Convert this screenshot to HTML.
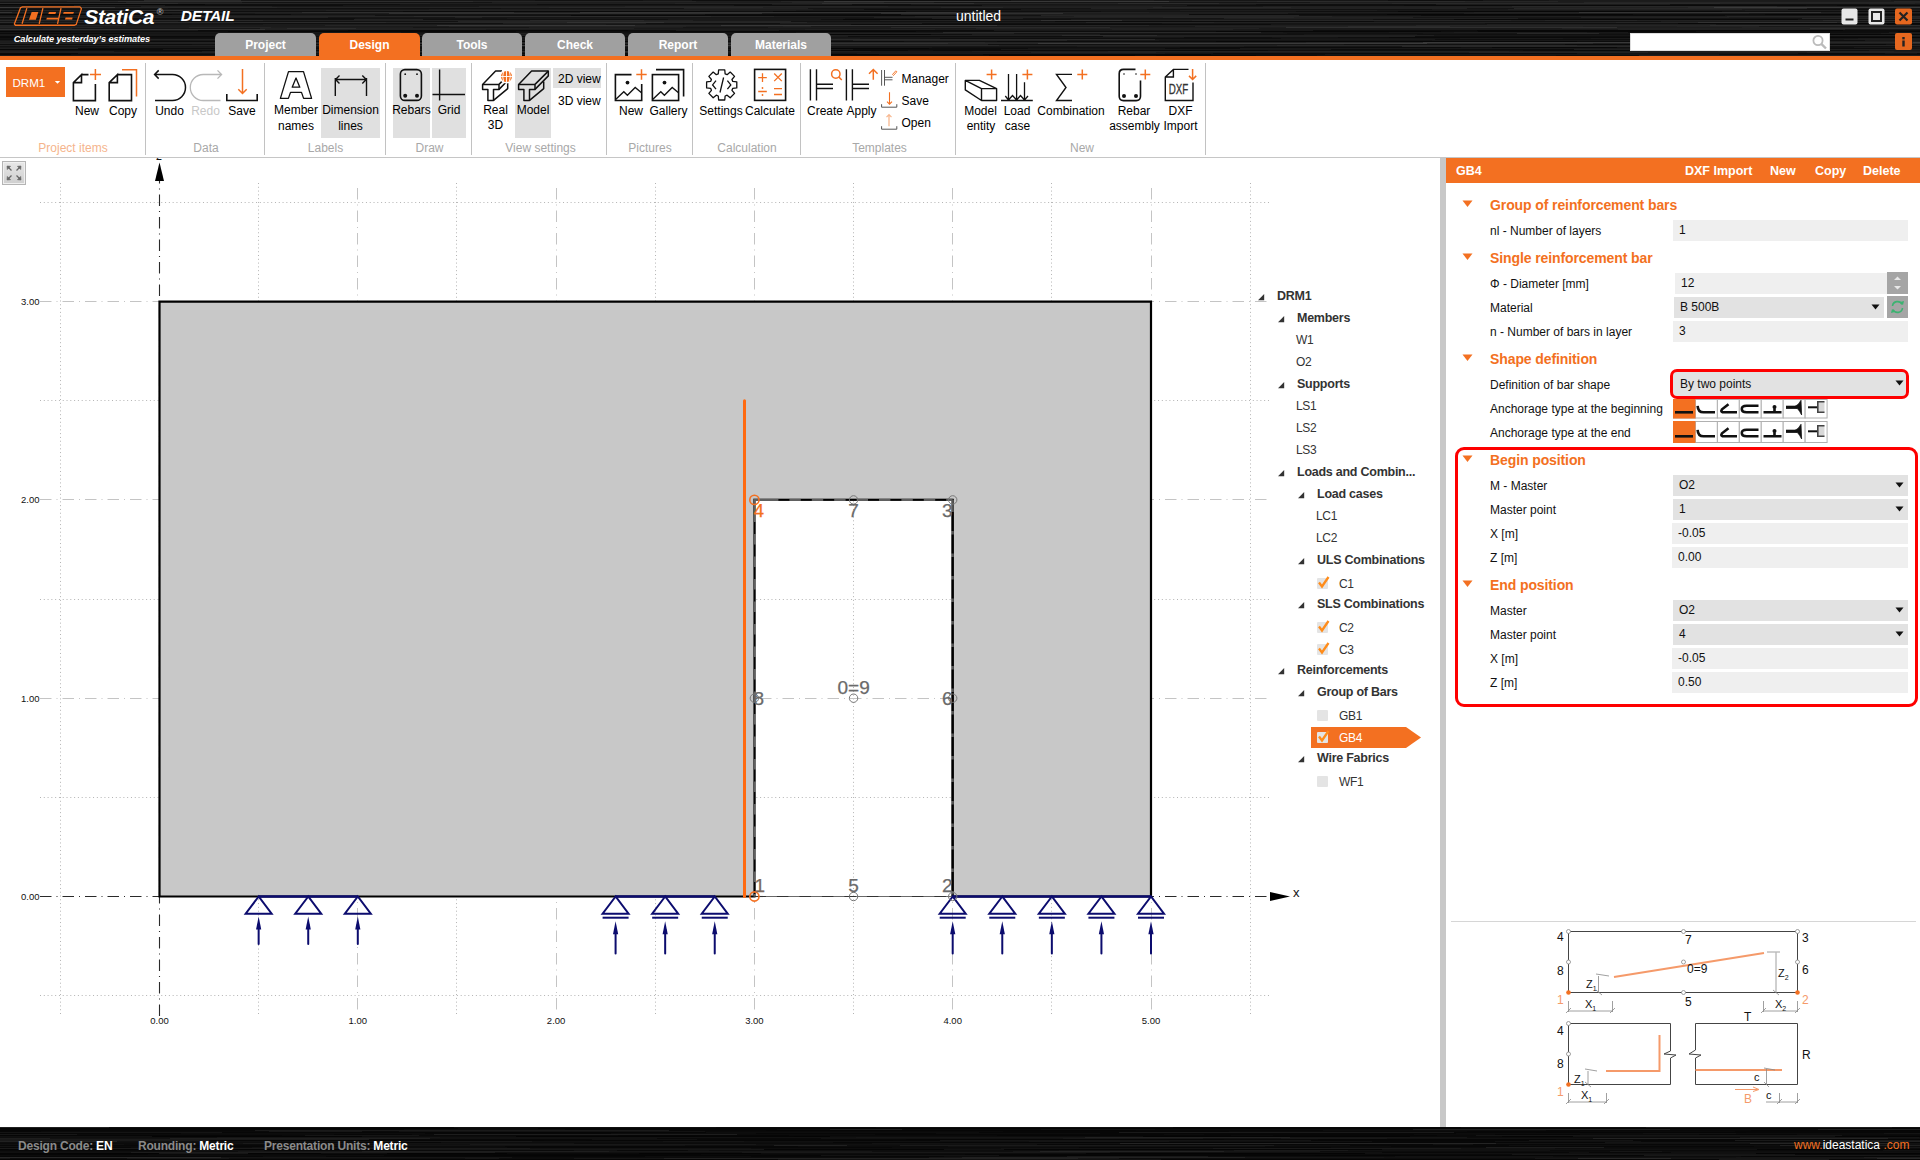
<!DOCTYPE html>
<html><head><meta charset="utf-8"><title>IDEA StatiCa Detail</title>
<style>
*{margin:0;padding:0;box-sizing:border-box}
html,body{width:1920px;height:1160px;overflow:hidden;background:#fff;font-family:"Liberation Sans", sans-serif;color:#000}
.abs{position:absolute}
.t{position:absolute;white-space:nowrap;line-height:1}
svg{position:absolute;overflow:visible}
</style></head><body>

<svg style="left:0;top:0px" width="1920" height="56"><rect x="0" y="0" width="1920" height="1" fill="rgb(22,22,22)"/><rect x="-162" y="0" width="262" height="1" fill="rgb(40,40,40)" opacity="0.7"/><rect x="144" y="0" width="97" height="1" fill="rgb(48,48,48)" opacity="0.7"/><rect x="535" y="0" width="108" height="1" fill="rgb(16,16,16)" opacity="0.7"/><rect x="692" y="0" width="319" height="1" fill="rgb(12,12,12)" opacity="0.7"/><rect x="1050" y="0" width="104" height="1" fill="rgb(30,30,30)" opacity="0.7"/><rect x="1388" y="0" width="95" height="1" fill="rgb(12,12,12)" opacity="0.7"/><rect x="1549" y="0" width="342" height="1" fill="rgb(30,30,30)" opacity="0.7"/><rect x="0" y="1" width="1920" height="1" fill="rgb(38,38,38)"/><rect x="-56" y="1" width="123" height="1" fill="rgb(28,28,28)" opacity="0.7"/><rect x="118" y="1" width="355" height="1" fill="rgb(50,50,50)" opacity="0.7"/><rect x="696" y="1" width="85" height="1" fill="rgb(28,28,28)" opacity="0.7"/><rect x="824" y="1" width="345" height="1" fill="rgb(64,64,64)" opacity="0.7"/><rect x="1257" y="1" width="208" height="1" fill="rgb(46,46,46)" opacity="0.7"/><rect x="1558" y="1" width="336" height="1" fill="rgb(24,24,24)" opacity="0.7"/><rect x="0" y="2" width="1920" height="1" fill="rgb(29,29,29)"/><rect x="-26" y="2" width="152" height="1" fill="rgb(15,15,15)" opacity="0.7"/><rect x="242" y="2" width="250" height="1" fill="rgb(15,15,15)" opacity="0.7"/><rect x="792" y="2" width="92" height="1" fill="rgb(41,41,41)" opacity="0.7"/><rect x="934" y="2" width="376" height="1" fill="rgb(19,19,19)" opacity="0.7"/><rect x="1584" y="2" width="408" height="1" fill="rgb(41,41,41)" opacity="0.7"/><rect x="0" y="3" width="1920" height="1" fill="rgb(36,36,36)"/><rect x="-120" y="3" width="298" height="1" fill="rgb(48,48,48)" opacity="0.7"/><rect x="430" y="3" width="245" height="1" fill="rgb(30,30,30)" opacity="0.7"/><rect x="822" y="3" width="152" height="1" fill="rgb(54,54,54)" opacity="0.7"/><rect x="1118" y="3" width="101" height="1" fill="rgb(48,48,48)" opacity="0.7"/><rect x="1392" y="3" width="328" height="1" fill="rgb(44,44,44)" opacity="0.7"/><rect x="1915" y="3" width="289" height="1" fill="rgb(30,30,30)" opacity="0.7"/><rect x="0" y="4" width="1920" height="1" fill="rgb(15,15,15)"/><rect x="-69" y="4" width="274" height="1" fill="rgb(5,5,5)" opacity="0.7"/><rect x="400" y="4" width="137" height="1" fill="rgb(23,23,23)" opacity="0.7"/><rect x="772" y="4" width="80" height="1" fill="rgb(33,33,33)" opacity="0.7"/><rect x="911" y="4" width="345" height="1" fill="rgb(27,27,27)" opacity="0.7"/><rect x="1436" y="4" width="234" height="1" fill="rgb(33,33,33)" opacity="0.7"/><rect x="1869" y="4" width="364" height="1" fill="rgb(23,23,23)" opacity="0.7"/><rect x="0" y="5" width="1920" height="1" fill="rgb(14,14,14)"/><rect x="-177" y="5" width="198" height="1" fill="rgb(22,22,22)" opacity="0.7"/><rect x="74" y="5" width="91" height="1" fill="rgb(32,32,32)" opacity="0.7"/><rect x="343" y="5" width="391" height="1" fill="rgb(26,26,26)" opacity="0.7"/><rect x="982" y="5" width="205" height="1" fill="rgb(32,32,32)" opacity="0.7"/><rect x="1404" y="5" width="402" height="1" fill="rgb(8,8,8)" opacity="0.7"/><rect x="1837" y="5" width="296" height="1" fill="rgb(8,8,8)" opacity="0.7"/><rect x="0" y="6" width="1920" height="1" fill="rgb(31,31,31)"/><rect x="-171" y="6" width="312" height="1" fill="rgb(17,17,17)" opacity="0.7"/><rect x="272" y="6" width="207" height="1" fill="rgb(21,21,21)" opacity="0.7"/><rect x="625" y="6" width="263" height="1" fill="rgb(39,39,39)" opacity="0.7"/><rect x="1162" y="6" width="101" height="1" fill="rgb(21,21,21)" opacity="0.7"/><rect x="1512" y="6" width="265" height="1" fill="rgb(43,43,43)" opacity="0.7"/><rect x="0" y="7" width="1920" height="1" fill="rgb(40,40,40)"/><rect x="-165" y="7" width="280" height="1" fill="rgb(66,66,66)" opacity="0.7"/><rect x="277" y="7" width="272" height="1" fill="rgb(34,34,34)" opacity="0.7"/><rect x="763" y="7" width="178" height="1" fill="rgb(30,30,30)" opacity="0.7"/><rect x="1003" y="7" width="150" height="1" fill="rgb(30,30,30)" opacity="0.7"/><rect x="1291" y="7" width="397" height="1" fill="rgb(30,30,30)" opacity="0.7"/><rect x="1714" y="7" width="308" height="1" fill="rgb(66,66,66)" opacity="0.7"/><rect x="0" y="8" width="1920" height="1" fill="rgb(20,20,20)"/><rect x="-128" y="8" width="62" height="1" fill="rgb(10,10,10)" opacity="0.7"/><rect x="168" y="8" width="333" height="1" fill="rgb(14,14,14)" opacity="0.7"/><rect x="684" y="8" width="124" height="1" fill="rgb(38,38,38)" opacity="0.7"/><rect x="1091" y="8" width="376" height="1" fill="rgb(38,38,38)" opacity="0.7"/><rect x="1514" y="8" width="293" height="1" fill="rgb(46,46,46)" opacity="0.7"/><rect x="0" y="9" width="1920" height="1" fill="rgb(24,24,24)"/><rect x="-98" y="9" width="261" height="1" fill="rgb(10,10,10)" opacity="0.7"/><rect x="429" y="9" width="384" height="1" fill="rgb(32,32,32)" opacity="0.7"/><rect x="864" y="9" width="157" height="1" fill="rgb(10,10,10)" opacity="0.7"/><rect x="1147" y="9" width="285" height="1" fill="rgb(14,14,14)" opacity="0.7"/><rect x="1508" y="9" width="234" height="1" fill="rgb(36,36,36)" opacity="0.7"/><rect x="1788" y="9" width="112" height="1" fill="rgb(10,10,10)" opacity="0.7"/><rect x="0" y="10" width="1920" height="1" fill="rgb(29,29,29)"/><rect x="-175" y="10" width="246" height="1" fill="rgb(41,41,41)" opacity="0.7"/><rect x="104" y="10" width="96" height="1" fill="rgb(55,55,55)" opacity="0.7"/><rect x="326" y="10" width="374" height="1" fill="rgb(37,37,37)" opacity="0.7"/><rect x="796" y="10" width="384" height="1" fill="rgb(23,23,23)" opacity="0.7"/><rect x="1377" y="10" width="368" height="1" fill="rgb(23,23,23)" opacity="0.7"/><rect x="0" y="11" width="1920" height="1" fill="rgb(15,15,15)"/><rect x="-171" y="11" width="309" height="1" fill="rgb(23,23,23)" opacity="0.7"/><rect x="403" y="11" width="307" height="1" fill="rgb(9,9,9)" opacity="0.7"/><rect x="773" y="11" width="133" height="1" fill="rgb(5,5,5)" opacity="0.7"/><rect x="1101" y="11" width="195" height="1" fill="rgb(23,23,23)" opacity="0.7"/><rect x="1398" y="11" width="324" height="1" fill="rgb(5,5,5)" opacity="0.7"/><rect x="1847" y="11" width="330" height="1" fill="rgb(9,9,9)" opacity="0.7"/><rect x="0" y="12" width="1920" height="1" fill="rgb(34,34,34)"/><rect x="-61" y="12" width="73" height="1" fill="rgb(60,60,60)" opacity="0.7"/><rect x="302" y="12" width="212" height="1" fill="rgb(52,52,52)" opacity="0.7"/><rect x="580" y="12" width="416" height="1" fill="rgb(60,60,60)" opacity="0.7"/><rect x="1149" y="12" width="325" height="1" fill="rgb(28,28,28)" opacity="0.7"/><rect x="1579" y="12" width="242" height="1" fill="rgb(60,60,60)" opacity="0.7"/><rect x="0" y="13" width="1920" height="1" fill="rgb(29,29,29)"/><rect x="-62" y="13" width="317" height="1" fill="rgb(23,23,23)" opacity="0.7"/><rect x="389" y="13" width="373" height="1" fill="rgb(55,55,55)" opacity="0.7"/><rect x="881" y="13" width="182" height="1" fill="rgb(55,55,55)" opacity="0.7"/><rect x="1288" y="13" width="176" height="1" fill="rgb(19,19,19)" opacity="0.7"/><rect x="1749" y="13" width="312" height="1" fill="rgb(23,23,23)" opacity="0.7"/><rect x="0" y="14" width="1920" height="1" fill="rgb(12,12,12)"/><rect x="-129" y="14" width="301" height="1" fill="rgb(6,6,6)" opacity="0.7"/><rect x="291" y="14" width="414" height="1" fill="rgb(24,24,24)" opacity="0.7"/><rect x="901" y="14" width="288" height="1" fill="rgb(38,38,38)" opacity="0.7"/><rect x="1387" y="14" width="246" height="1" fill="rgb(5,5,5)" opacity="0.7"/><rect x="1765" y="14" width="112" height="1" fill="rgb(5,5,5)" opacity="0.7"/><rect x="0" y="15" width="1920" height="1" fill="rgb(18,18,18)"/><rect x="-114" y="15" width="164" height="1" fill="rgb(26,26,26)" opacity="0.7"/><rect x="70" y="15" width="305" height="1" fill="rgb(36,36,36)" opacity="0.7"/><rect x="571" y="15" width="389" height="1" fill="rgb(5,5,5)" opacity="0.7"/><rect x="1041" y="15" width="258" height="1" fill="rgb(44,44,44)" opacity="0.7"/><rect x="1421" y="15" width="304" height="1" fill="rgb(8,8,8)" opacity="0.7"/><rect x="0" y="16" width="1920" height="1" fill="rgb(37,37,37)"/><rect x="-38" y="16" width="230" height="1" fill="rgb(23,23,23)" opacity="0.7"/><rect x="414" y="16" width="297" height="1" fill="rgb(45,45,45)" opacity="0.7"/><rect x="774" y="16" width="141" height="1" fill="rgb(27,27,27)" opacity="0.7"/><rect x="1000" y="16" width="74" height="1" fill="rgb(27,27,27)" opacity="0.7"/><rect x="1332" y="16" width="395" height="1" fill="rgb(27,27,27)" opacity="0.7"/><rect x="0" y="17" width="1920" height="1" fill="rgb(33,33,33)"/><rect x="-111" y="17" width="139" height="1" fill="rgb(45,45,45)" opacity="0.7"/><rect x="328" y="17" width="127" height="1" fill="rgb(19,19,19)" opacity="0.7"/><rect x="482" y="17" width="392" height="1" fill="rgb(19,19,19)" opacity="0.7"/><rect x="1163" y="17" width="131" height="1" fill="rgb(41,41,41)" opacity="0.7"/><rect x="1413" y="17" width="168" height="1" fill="rgb(19,19,19)" opacity="0.7"/><rect x="1729" y="17" width="168" height="1" fill="rgb(27,27,27)" opacity="0.7"/><rect x="0" y="18" width="1920" height="1" fill="rgb(19,19,19)"/><rect x="-5" y="18" width="360" height="1" fill="rgb(13,13,13)" opacity="0.7"/><rect x="507" y="18" width="338" height="1" fill="rgb(27,27,27)" opacity="0.7"/><rect x="932" y="18" width="91" height="1" fill="rgb(37,37,37)" opacity="0.7"/><rect x="1224" y="18" width="294" height="1" fill="rgb(37,37,37)" opacity="0.7"/><rect x="1802" y="18" width="275" height="1" fill="rgb(45,45,45)" opacity="0.7"/><rect x="0" y="19" width="1920" height="1" fill="rgb(16,16,16)"/><rect x="-64" y="19" width="137" height="1" fill="rgb(28,28,28)" opacity="0.7"/><rect x="354" y="19" width="69" height="1" fill="rgb(42,42,42)" opacity="0.7"/><rect x="668" y="19" width="153" height="1" fill="rgb(28,28,28)" opacity="0.7"/><rect x="843" y="19" width="136" height="1" fill="rgb(6,6,6)" opacity="0.7"/><rect x="1071" y="19" width="302" height="1" fill="rgb(28,28,28)" opacity="0.7"/><rect x="1454" y="19" width="344" height="1" fill="rgb(5,5,5)" opacity="0.7"/><rect x="0" y="20" width="1920" height="1" fill="rgb(33,33,33)"/><rect x="-68" y="20" width="331" height="1" fill="rgb(45,45,45)" opacity="0.7"/><rect x="530" y="20" width="114" height="1" fill="rgb(45,45,45)" opacity="0.7"/><rect x="693" y="20" width="187" height="1" fill="rgb(23,23,23)" opacity="0.7"/><rect x="1041" y="20" width="81" height="1" fill="rgb(59,59,59)" opacity="0.7"/><rect x="1192" y="20" width="319" height="1" fill="rgb(41,41,41)" opacity="0.7"/><rect x="1545" y="20" width="92" height="1" fill="rgb(41,41,41)" opacity="0.7"/><rect x="1823" y="20" width="373" height="1" fill="rgb(45,45,45)" opacity="0.7"/><rect x="0" y="21" width="1920" height="1" fill="rgb(18,18,18)"/><rect x="-23" y="21" width="201" height="1" fill="rgb(26,26,26)" opacity="0.7"/><rect x="458" y="21" width="333" height="1" fill="rgb(44,44,44)" opacity="0.7"/><rect x="1055" y="21" width="319" height="1" fill="rgb(8,8,8)" opacity="0.7"/><rect x="1661" y="21" width="192" height="1" fill="rgb(30,30,30)" opacity="0.7"/><rect x="0" y="22" width="1920" height="1" fill="rgb(38,38,38)"/><rect x="-86" y="22" width="130" height="1" fill="rgb(46,46,46)" opacity="0.7"/><rect x="126" y="22" width="260" height="1" fill="rgb(46,46,46)" opacity="0.7"/><rect x="567" y="22" width="97" height="1" fill="rgb(56,56,56)" opacity="0.7"/><rect x="807" y="22" width="279" height="1" fill="rgb(24,24,24)" opacity="0.7"/><rect x="1214" y="22" width="402" height="1" fill="rgb(32,32,32)" opacity="0.7"/><rect x="1698" y="22" width="139" height="1" fill="rgb(56,56,56)" opacity="0.7"/><rect x="0" y="23" width="1920" height="1" fill="rgb(16,16,16)"/><rect x="-136" y="23" width="130" height="1" fill="rgb(24,24,24)" opacity="0.7"/><rect x="126" y="23" width="108" height="1" fill="rgb(24,24,24)" opacity="0.7"/><rect x="503" y="23" width="143" height="1" fill="rgb(34,34,34)" opacity="0.7"/><rect x="780" y="23" width="142" height="1" fill="rgb(34,34,34)" opacity="0.7"/><rect x="1162" y="23" width="323" height="1" fill="rgb(24,24,24)" opacity="0.7"/><rect x="1678" y="23" width="275" height="1" fill="rgb(6,6,6)" opacity="0.7"/><rect x="0" y="24" width="1920" height="1" fill="rgb(22,22,22)"/><rect x="-177" y="24" width="247" height="1" fill="rgb(8,8,8)" opacity="0.7"/><rect x="263" y="24" width="343" height="1" fill="rgb(30,30,30)" opacity="0.7"/><rect x="851" y="24" width="420" height="1" fill="rgb(8,8,8)" opacity="0.7"/><rect x="1487" y="24" width="229" height="1" fill="rgb(34,34,34)" opacity="0.7"/><rect x="1887" y="24" width="322" height="1" fill="rgb(8,8,8)" opacity="0.7"/><rect x="0" y="25" width="1920" height="1" fill="rgb(37,37,37)"/><rect x="-142" y="25" width="113" height="1" fill="rgb(23,23,23)" opacity="0.7"/><rect x="126" y="25" width="199" height="1" fill="rgb(23,23,23)" opacity="0.7"/><rect x="437" y="25" width="198" height="1" fill="rgb(63,63,63)" opacity="0.7"/><rect x="721" y="25" width="276" height="1" fill="rgb(63,63,63)" opacity="0.7"/><rect x="1149" y="25" width="267" height="1" fill="rgb(27,27,27)" opacity="0.7"/><rect x="1710" y="25" width="323" height="1" fill="rgb(49,49,49)" opacity="0.7"/><rect x="0" y="26" width="1920" height="1" fill="rgb(34,34,34)"/><rect x="-117" y="26" width="105" height="1" fill="rgb(28,28,28)" opacity="0.7"/><rect x="37" y="26" width="412" height="1" fill="rgb(24,24,24)" opacity="0.7"/><rect x="686" y="26" width="97" height="1" fill="rgb(28,28,28)" opacity="0.7"/><rect x="811" y="26" width="384" height="1" fill="rgb(20,20,20)" opacity="0.7"/><rect x="1348" y="26" width="102" height="1" fill="rgb(46,46,46)" opacity="0.7"/><rect x="1583" y="26" width="94" height="1" fill="rgb(28,28,28)" opacity="0.7"/><rect x="1759" y="26" width="292" height="1" fill="rgb(20,20,20)" opacity="0.7"/><rect x="0" y="27" width="1920" height="1" fill="rgb(29,29,29)"/><rect x="-94" y="27" width="197" height="1" fill="rgb(41,41,41)" opacity="0.7"/><rect x="189" y="27" width="82" height="1" fill="rgb(41,41,41)" opacity="0.7"/><rect x="413" y="27" width="116" height="1" fill="rgb(19,19,19)" opacity="0.7"/><rect x="683" y="27" width="85" height="1" fill="rgb(19,19,19)" opacity="0.7"/><rect x="891" y="27" width="219" height="1" fill="rgb(47,47,47)" opacity="0.7"/><rect x="1286" y="27" width="331" height="1" fill="rgb(55,55,55)" opacity="0.7"/><rect x="1742" y="27" width="208" height="1" fill="rgb(37,37,37)" opacity="0.7"/><rect x="0" y="28" width="1920" height="1" fill="rgb(33,33,33)"/><rect x="-155" y="28" width="198" height="1" fill="rgb(27,27,27)" opacity="0.7"/><rect x="72" y="28" width="188" height="1" fill="rgb(19,19,19)" opacity="0.7"/><rect x="287" y="28" width="69" height="1" fill="rgb(51,51,51)" opacity="0.7"/><rect x="634" y="28" width="342" height="1" fill="rgb(23,23,23)" opacity="0.7"/><rect x="1259" y="28" width="303" height="1" fill="rgb(23,23,23)" opacity="0.7"/><rect x="1810" y="28" width="114" height="1" fill="rgb(51,51,51)" opacity="0.7"/><rect x="0" y="29" width="1920" height="1" fill="rgb(33,33,33)"/><rect x="-74" y="29" width="339" height="1" fill="rgb(59,59,59)" opacity="0.7"/><rect x="486" y="29" width="319" height="1" fill="rgb(27,27,27)" opacity="0.7"/><rect x="935" y="29" width="177" height="1" fill="rgb(27,27,27)" opacity="0.7"/><rect x="1233" y="29" width="385" height="1" fill="rgb(23,23,23)" opacity="0.7"/><rect x="1845" y="29" width="237" height="1" fill="rgb(19,19,19)" opacity="0.7"/><rect x="0" y="30" width="1920" height="1" fill="rgb(12,12,12)"/><rect x="-182" y="30" width="380" height="1" fill="rgb(30,30,30)" opacity="0.7"/><rect x="348" y="30" width="280" height="1" fill="rgb(5,5,5)" opacity="0.7"/><rect x="676" y="30" width="103" height="1" fill="rgb(30,30,30)" opacity="0.7"/><rect x="994" y="30" width="319" height="1" fill="rgb(30,30,30)" opacity="0.7"/><rect x="1477" y="30" width="366" height="1" fill="rgb(5,5,5)" opacity="0.7"/><rect x="0" y="31" width="1920" height="1" fill="rgb(13,13,13)"/><rect x="-83" y="31" width="154" height="1" fill="rgb(5,5,5)" opacity="0.7"/><rect x="228" y="31" width="288" height="1" fill="rgb(5,5,5)" opacity="0.7"/><rect x="670" y="31" width="246" height="1" fill="rgb(7,7,7)" opacity="0.7"/><rect x="1216" y="31" width="225" height="1" fill="rgb(5,5,5)" opacity="0.7"/><rect x="1478" y="31" width="218" height="1" fill="rgb(5,5,5)" opacity="0.7"/><rect x="1898" y="31" width="153" height="1" fill="rgb(5,5,5)" opacity="0.7"/><rect x="0" y="32" width="1920" height="1" fill="rgb(24,24,24)"/><rect x="-179" y="32" width="303" height="1" fill="rgb(18,18,18)" opacity="0.7"/><rect x="401" y="32" width="395" height="1" fill="rgb(14,14,14)" opacity="0.7"/><rect x="943" y="32" width="318" height="1" fill="rgb(50,50,50)" opacity="0.7"/><rect x="1283" y="32" width="106" height="1" fill="rgb(18,18,18)" opacity="0.7"/><rect x="1454" y="32" width="133" height="1" fill="rgb(32,32,32)" opacity="0.7"/><rect x="1628" y="32" width="261" height="1" fill="rgb(10,10,10)" opacity="0.7"/><rect x="0" y="33" width="1920" height="1" fill="rgb(21,21,21)"/><rect x="-39" y="33" width="179" height="1" fill="rgb(7,7,7)" opacity="0.7"/><rect x="430" y="33" width="139" height="1" fill="rgb(39,39,39)" opacity="0.7"/><rect x="788" y="33" width="226" height="1" fill="rgb(39,39,39)" opacity="0.7"/><rect x="1287" y="33" width="136" height="1" fill="rgb(15,15,15)" opacity="0.7"/><rect x="1517" y="33" width="82" height="1" fill="rgb(47,47,47)" opacity="0.7"/><rect x="1881" y="33" width="381" height="1" fill="rgb(29,29,29)" opacity="0.7"/><rect x="0" y="34" width="1920" height="1" fill="rgb(16,16,16)"/><rect x="-66" y="34" width="318" height="1" fill="rgb(28,28,28)" opacity="0.7"/><rect x="280" y="34" width="411" height="1" fill="rgb(28,28,28)" opacity="0.7"/><rect x="828" y="34" width="103" height="1" fill="rgb(5,5,5)" opacity="0.7"/><rect x="972" y="34" width="128" height="1" fill="rgb(34,34,34)" opacity="0.7"/><rect x="1304" y="34" width="113" height="1" fill="rgb(24,24,24)" opacity="0.7"/><rect x="1668" y="34" width="345" height="1" fill="rgb(5,5,5)" opacity="0.7"/><rect x="0" y="35" width="1920" height="1" fill="rgb(32,32,32)"/><rect x="-64" y="35" width="408" height="1" fill="rgb(22,22,22)" opacity="0.7"/><rect x="614" y="35" width="195" height="1" fill="rgb(18,18,18)" opacity="0.7"/><rect x="1062" y="35" width="95" height="1" fill="rgb(50,50,50)" opacity="0.7"/><rect x="1434" y="35" width="334" height="1" fill="rgb(18,18,18)" opacity="0.7"/><rect x="0" y="36" width="1920" height="1" fill="rgb(14,14,14)"/><rect x="-10" y="36" width="302" height="1" fill="rgb(8,8,8)" opacity="0.7"/><rect x="350" y="36" width="195" height="1" fill="rgb(5,5,5)" opacity="0.7"/><rect x="670" y="36" width="178" height="1" fill="rgb(32,32,32)" opacity="0.7"/><rect x="1103" y="36" width="312" height="1" fill="rgb(40,40,40)" opacity="0.7"/><rect x="1630" y="36" width="99" height="1" fill="rgb(22,22,22)" opacity="0.7"/><rect x="1896" y="36" width="83" height="1" fill="rgb(26,26,26)" opacity="0.7"/><rect x="0" y="37" width="1920" height="1" fill="rgb(14,14,14)"/><rect x="-47" y="37" width="135" height="1" fill="rgb(8,8,8)" opacity="0.7"/><rect x="238" y="37" width="393" height="1" fill="rgb(32,32,32)" opacity="0.7"/><rect x="806" y="37" width="378" height="1" fill="rgb(26,26,26)" opacity="0.7"/><rect x="1272" y="37" width="66" height="1" fill="rgb(22,22,22)" opacity="0.7"/><rect x="1389" y="37" width="308" height="1" fill="rgb(8,8,8)" opacity="0.7"/><rect x="1767" y="37" width="414" height="1" fill="rgb(5,5,5)" opacity="0.7"/><rect x="0" y="38" width="1920" height="1" fill="rgb(21,21,21)"/><rect x="-19" y="38" width="324" height="1" fill="rgb(15,15,15)" opacity="0.7"/><rect x="562" y="38" width="298" height="1" fill="rgb(29,29,29)" opacity="0.7"/><rect x="940" y="38" width="341" height="1" fill="rgb(11,11,11)" opacity="0.7"/><rect x="1460" y="38" width="103" height="1" fill="rgb(29,29,29)" opacity="0.7"/><rect x="1591" y="38" width="208" height="1" fill="rgb(29,29,29)" opacity="0.7"/><rect x="1858" y="38" width="319" height="1" fill="rgb(29,29,29)" opacity="0.7"/><rect x="0" y="39" width="1920" height="1" fill="rgb(24,24,24)"/><rect x="-147" y="39" width="167" height="1" fill="rgb(10,10,10)" opacity="0.7"/><rect x="86" y="39" width="132" height="1" fill="rgb(42,42,42)" opacity="0.7"/><rect x="506" y="39" width="194" height="1" fill="rgb(18,18,18)" opacity="0.7"/><rect x="787" y="39" width="368" height="1" fill="rgb(50,50,50)" opacity="0.7"/><rect x="1435" y="39" width="203" height="1" fill="rgb(10,10,10)" opacity="0.7"/><rect x="1844" y="39" width="178" height="1" fill="rgb(32,32,32)" opacity="0.7"/><rect x="0" y="40" width="1920" height="1" fill="rgb(24,24,24)"/><rect x="-194" y="40" width="141" height="1" fill="rgb(10,10,10)" opacity="0.7"/><rect x="218" y="40" width="408" height="1" fill="rgb(32,32,32)" opacity="0.7"/><rect x="853" y="40" width="214" height="1" fill="rgb(42,42,42)" opacity="0.7"/><rect x="1159" y="40" width="273" height="1" fill="rgb(18,18,18)" opacity="0.7"/><rect x="1644" y="40" width="221" height="1" fill="rgb(10,10,10)" opacity="0.7"/><rect x="0" y="41" width="1920" height="1" fill="rgb(12,12,12)"/><rect x="-117" y="41" width="233" height="1" fill="rgb(38,38,38)" opacity="0.7"/><rect x="339" y="41" width="121" height="1" fill="rgb(5,5,5)" opacity="0.7"/><rect x="486" y="41" width="208" height="1" fill="rgb(6,6,6)" opacity="0.7"/><rect x="904" y="41" width="93" height="1" fill="rgb(20,20,20)" opacity="0.7"/><rect x="1216" y="41" width="361" height="1" fill="rgb(5,5,5)" opacity="0.7"/><rect x="1781" y="41" width="279" height="1" fill="rgb(38,38,38)" opacity="0.7"/><rect x="0" y="42" width="1920" height="1" fill="rgb(39,39,39)"/><rect x="-188" y="42" width="203" height="1" fill="rgb(25,25,25)" opacity="0.7"/><rect x="61" y="42" width="398" height="1" fill="rgb(33,33,33)" opacity="0.7"/><rect x="555" y="42" width="187" height="1" fill="rgb(33,33,33)" opacity="0.7"/><rect x="985" y="42" width="321" height="1" fill="rgb(33,33,33)" opacity="0.7"/><rect x="1423" y="42" width="251" height="1" fill="rgb(65,65,65)" opacity="0.7"/><rect x="1913" y="42" width="74" height="1" fill="rgb(65,65,65)" opacity="0.7"/><rect x="0" y="43" width="1920" height="1" fill="rgb(40,40,40)"/><rect x="-59" y="43" width="341" height="1" fill="rgb(30,30,30)" opacity="0.7"/><rect x="343" y="43" width="85" height="1" fill="rgb(58,58,58)" opacity="0.7"/><rect x="658" y="43" width="290" height="1" fill="rgb(52,52,52)" opacity="0.7"/><rect x="1038" y="43" width="389" height="1" fill="rgb(66,66,66)" opacity="0.7"/><rect x="1593" y="43" width="308" height="1" fill="rgb(26,26,26)" opacity="0.7"/><rect x="0" y="44" width="1920" height="1" fill="rgb(17,17,17)"/><rect x="-80" y="44" width="272" height="1" fill="rgb(11,11,11)" opacity="0.7"/><rect x="356" y="44" width="212" height="1" fill="rgb(11,11,11)" opacity="0.7"/><rect x="721" y="44" width="267" height="1" fill="rgb(35,35,35)" opacity="0.7"/><rect x="1130" y="44" width="214" height="1" fill="rgb(25,25,25)" opacity="0.7"/><rect x="1565" y="44" width="121" height="1" fill="rgb(7,7,7)" opacity="0.7"/><rect x="1788" y="44" width="98" height="1" fill="rgb(7,7,7)" opacity="0.7"/><rect x="0" y="45" width="1920" height="1" fill="rgb(40,40,40)"/><rect x="-73" y="45" width="341" height="1" fill="rgb(30,30,30)" opacity="0.7"/><rect x="519" y="45" width="230" height="1" fill="rgb(66,66,66)" opacity="0.7"/><rect x="999" y="45" width="278" height="1" fill="rgb(30,30,30)" opacity="0.7"/><rect x="1577" y="45" width="158" height="1" fill="rgb(30,30,30)" opacity="0.7"/><rect x="1801" y="45" width="149" height="1" fill="rgb(34,34,34)" opacity="0.7"/><rect x="0" y="46" width="1920" height="1" fill="rgb(22,22,22)"/><rect x="-139" y="46" width="248" height="1" fill="rgb(16,16,16)" opacity="0.7"/><rect x="232" y="46" width="70" height="1" fill="rgb(40,40,40)" opacity="0.7"/><rect x="533" y="46" width="256" height="1" fill="rgb(30,30,30)" opacity="0.7"/><rect x="1077" y="46" width="167" height="1" fill="rgb(30,30,30)" opacity="0.7"/><rect x="1402" y="46" width="233" height="1" fill="rgb(48,48,48)" opacity="0.7"/><rect x="1686" y="46" width="315" height="1" fill="rgb(16,16,16)" opacity="0.7"/><rect x="0" y="47" width="1920" height="1" fill="rgb(16,16,16)"/><rect x="-25" y="47" width="317" height="1" fill="rgb(28,28,28)" opacity="0.7"/><rect x="422" y="47" width="107" height="1" fill="rgb(10,10,10)" opacity="0.7"/><rect x="676" y="47" width="256" height="1" fill="rgb(24,24,24)" opacity="0.7"/><rect x="1180" y="47" width="281" height="1" fill="rgb(10,10,10)" opacity="0.7"/><rect x="1492" y="47" width="125" height="1" fill="rgb(5,5,5)" opacity="0.7"/><rect x="1854" y="47" width="302" height="1" fill="rgb(28,28,28)" opacity="0.7"/><rect x="0" y="48" width="1920" height="1" fill="rgb(12,12,12)"/><rect x="-182" y="48" width="260" height="1" fill="rgb(38,38,38)" opacity="0.7"/><rect x="368" y="48" width="299" height="1" fill="rgb(20,20,20)" opacity="0.7"/><rect x="814" y="48" width="115" height="1" fill="rgb(5,5,5)" opacity="0.7"/><rect x="1028" y="48" width="137" height="1" fill="rgb(24,24,24)" opacity="0.7"/><rect x="1240" y="48" width="418" height="1" fill="rgb(30,30,30)" opacity="0.7"/><rect x="1912" y="48" width="103" height="1" fill="rgb(24,24,24)" opacity="0.7"/><rect x="0" y="49" width="1920" height="1" fill="rgb(12,12,12)"/><rect x="0" y="49" width="124" height="1" fill="rgb(5,5,5)" opacity="0.7"/><rect x="163" y="49" width="390" height="1" fill="rgb(30,30,30)" opacity="0.7"/><rect x="728" y="49" width="125" height="1" fill="rgb(30,30,30)" opacity="0.7"/><rect x="1001" y="49" width="330" height="1" fill="rgb(30,30,30)" opacity="0.7"/><rect x="1574" y="49" width="417" height="1" fill="rgb(38,38,38)" opacity="0.7"/><rect x="0" y="50" width="1920" height="1" fill="rgb(15,15,15)"/><rect x="-182" y="50" width="213" height="1" fill="rgb(27,27,27)" opacity="0.7"/><rect x="149" y="50" width="258" height="1" fill="rgb(9,9,9)" opacity="0.7"/><rect x="541" y="50" width="367" height="1" fill="rgb(5,5,5)" opacity="0.7"/><rect x="933" y="50" width="335" height="1" fill="rgb(9,9,9)" opacity="0.7"/><rect x="1523" y="50" width="202" height="1" fill="rgb(9,9,9)" opacity="0.7"/><rect x="1869" y="50" width="303" height="1" fill="rgb(27,27,27)" opacity="0.7"/><rect x="0" y="51" width="1920" height="1" fill="rgb(29,29,29)"/><rect x="-137" y="51" width="74" height="1" fill="rgb(37,37,37)" opacity="0.7"/><rect x="114" y="51" width="88" height="1" fill="rgb(15,15,15)" opacity="0.7"/><rect x="321" y="51" width="315" height="1" fill="rgb(47,47,47)" opacity="0.7"/><rect x="871" y="51" width="101" height="1" fill="rgb(23,23,23)" opacity="0.7"/><rect x="1108" y="51" width="401" height="1" fill="rgb(37,37,37)" opacity="0.7"/><rect x="1718" y="51" width="176" height="1" fill="rgb(37,37,37)" opacity="0.7"/><rect x="0" y="52" width="1920" height="1" fill="rgb(34,34,34)"/><rect x="-114" y="52" width="275" height="1" fill="rgb(28,28,28)" opacity="0.7"/><rect x="383" y="52" width="161" height="1" fill="rgb(20,20,20)" opacity="0.7"/><rect x="713" y="52" width="318" height="1" fill="rgb(20,20,20)" opacity="0.7"/><rect x="1156" y="52" width="313" height="1" fill="rgb(24,24,24)" opacity="0.7"/><rect x="1648" y="52" width="159" height="1" fill="rgb(24,24,24)" opacity="0.7"/><rect x="0" y="53" width="1920" height="1" fill="rgb(19,19,19)"/><rect x="-133" y="53" width="211" height="1" fill="rgb(5,5,5)" opacity="0.7"/><rect x="351" y="53" width="372" height="1" fill="rgb(9,9,9)" opacity="0.7"/><rect x="857" y="53" width="308" height="1" fill="rgb(27,27,27)" opacity="0.7"/><rect x="1213" y="53" width="364" height="1" fill="rgb(9,9,9)" opacity="0.7"/><rect x="1798" y="53" width="87" height="1" fill="rgb(9,9,9)" opacity="0.7"/><rect x="1917" y="53" width="365" height="1" fill="rgb(9,9,9)" opacity="0.7"/><rect x="0" y="54" width="1920" height="1" fill="rgb(13,13,13)"/><rect x="-19" y="54" width="90" height="1" fill="rgb(5,5,5)" opacity="0.7"/><rect x="292" y="54" width="290" height="1" fill="rgb(31,31,31)" opacity="0.7"/><rect x="762" y="54" width="117" height="1" fill="rgb(5,5,5)" opacity="0.7"/><rect x="983" y="54" width="228" height="1" fill="rgb(5,5,5)" opacity="0.7"/><rect x="1325" y="54" width="394" height="1" fill="rgb(25,25,25)" opacity="0.7"/><rect x="0" y="55" width="1920" height="1" fill="rgb(13,13,13)"/><rect x="-121" y="55" width="400" height="1" fill="rgb(31,31,31)" opacity="0.7"/><rect x="492" y="55" width="251" height="1" fill="rgb(7,7,7)" opacity="0.7"/><rect x="989" y="55" width="146" height="1" fill="rgb(5,5,5)" opacity="0.7"/><rect x="1156" y="55" width="100" height="1" fill="rgb(7,7,7)" opacity="0.7"/><rect x="1317" y="55" width="239" height="1" fill="rgb(21,21,21)" opacity="0.7"/><rect x="1639" y="55" width="347" height="1" fill="rgb(39,39,39)" opacity="0.7"/></svg>
<div class="abs" style="left:0;top:56px;width:1920px;height:4px;background:#f37021"></div>
<svg style="left:0;top:0" width="260" height="56">
<path d="M22.50,6.92 L80.00,6.92 L81.46,8.58 L76.25,24.42 L74.58,25.25 L15.42,25.25 L14.38,24.00 L20.62,7.54Z" fill="none" stroke="#f37021" stroke-width="1.3" stroke-linejoin="round"/>
<path d="M26.88,8.17 L22.08,23.79 M42.92,8.17 L39.17,23.79 M61.04,8.17 L57.50,23.79" fill="none" stroke="#f37021" stroke-width="1.3"/>
<path d="M31.67,11.92 L38.33,11.92 L35.83,19.83 L28.96,19.83Z M48.96,12.12 L56.04,12.12 L55.42,14.00 L48.33,14.00Z M46.88,17.75 L59.17,17.75 L58.54,19.62 L46.25,19.62Z M63.75,11.92 L73.96,11.92 L73.33,13.79 L63.12,13.79Z M65.62,17.54 L72.71,17.54 L72.08,19.62 L65.00,19.62Z" fill="#f37021"/>
</svg>
<div class="t" style="left:84.3px;top:5.6px;font-size:21px;color:#fff;font-weight:bold;font-style:italic;letter-spacing:-0.35px">StatiCa</div>
<div class="t" style="left:156.8px;top:7.5px;font-size:9px;color:#c8c8c8;font-weight:normal;font-style:normal;">®</div>
<div class="t" style="left:180.8px;top:8.2px;font-size:15.5px;color:#fff;font-weight:bold;font-style:italic;letter-spacing:-0.2px">DETAIL</div>
<div class="t" style="left:13.8px;top:34.7px;font-size:9.2px;color:#fff;font-weight:bold;font-style:italic;letter-spacing:-0.08px">Calculate yesterday’s estimates</div>
<div class="abs" style="left:215px;top:33px;width:101px;height:23px;background:#a0a0a0;border-radius:5px 5px 0 0"></div>
<div class="t" style="left:115.5px;top:38.9px;width:300px;text-align:center;font-size:12px;color:#fff;font-weight:bold;">Project</div>
<div class="abs" style="left:319px;top:33px;width:101px;height:23px;background:#f37021;border-radius:5px 5px 0 0"></div>
<div class="t" style="left:219.5px;top:38.9px;width:300px;text-align:center;font-size:12px;color:#fff;font-weight:bold;">Design</div>
<div class="abs" style="left:422px;top:33px;width:100px;height:23px;background:#a0a0a0;border-radius:5px 5px 0 0"></div>
<div class="t" style="left:322.0px;top:38.9px;width:300px;text-align:center;font-size:12px;color:#fff;font-weight:bold;">Tools</div>
<div class="abs" style="left:525px;top:33px;width:100px;height:23px;background:#a0a0a0;border-radius:5px 5px 0 0"></div>
<div class="t" style="left:425.0px;top:38.9px;width:300px;text-align:center;font-size:12px;color:#fff;font-weight:bold;">Check</div>
<div class="abs" style="left:628px;top:33px;width:100px;height:23px;background:#a0a0a0;border-radius:5px 5px 0 0"></div>
<div class="t" style="left:528.0px;top:38.9px;width:300px;text-align:center;font-size:12px;color:#fff;font-weight:bold;">Report</div>
<div class="abs" style="left:731px;top:33px;width:100px;height:23px;background:#a0a0a0;border-radius:5px 5px 0 0"></div>
<div class="t" style="left:631.0px;top:38.9px;width:300px;text-align:center;font-size:12px;color:#fff;font-weight:bold;">Materials</div>
<div class="t" style="left:828.5px;top:9.1px;width:300px;text-align:center;font-size:14px;color:#fff;font-weight:normal;">untitled</div>
<svg style="left:1830px;top:0" width="90" height="56">
<rect x="11.5" y="8.5" width="16" height="16" rx="2" fill="#e8e8e8"/>
<rect x="15.5" y="18.5" width="8" height="2" fill="#222"/>
<rect x="38.5" y="8.5" width="16" height="16" rx="2" fill="#e8e8e8"/>
<rect x="42" y="12" width="9" height="9" fill="none" stroke="#222" stroke-width="2"/>
<rect x="65" y="8.5" width="17" height="16" rx="2" fill="#e5671f"/>
<path d="M69.5,12.5 L77.5,20.5 M77.5,12.5 L69.5,20.5" stroke="#222" stroke-width="2.2"/>
<rect x="65" y="33" width="17" height="17" rx="2" fill="#e5671f"/>
<rect x="72.3" y="37" width="2.4" height="2.4" fill="#222"/>
<rect x="72.3" y="40.5" width="2.4" height="6" fill="#222"/>
</svg>
<div class="abs" style="left:1630px;top:33px;width:200px;height:18px;background:#fff;border:1px solid #ddd"></div>
<svg style="left:1810px;top:33px" width="20" height="18">
<circle cx="8" cy="7.5" r="4.6" fill="none" stroke="#bbb" stroke-width="1.8"/>
<path d="M11.3,10.8 L16,15.5" stroke="#bbb" stroke-width="2.4"/>
</svg>
<div class="abs" style="left:0;top:157px;width:1920px;height:1px;background:#c6c6c6"></div>
<div class="abs" style="left:145.0px;top:63px;width:1px;height:92px;background:#c2c2c2"></div>
<div class="abs" style="left:264.0px;top:63px;width:1px;height:92px;background:#c2c2c2"></div>
<div class="abs" style="left:385.0px;top:63px;width:1px;height:92px;background:#c2c2c2"></div>
<div class="abs" style="left:471.0px;top:63px;width:1px;height:92px;background:#c2c2c2"></div>
<div class="abs" style="left:606.0px;top:63px;width:1px;height:92px;background:#c2c2c2"></div>
<div class="abs" style="left:692.0px;top:63px;width:1px;height:92px;background:#c2c2c2"></div>
<div class="abs" style="left:800.0px;top:63px;width:1px;height:92px;background:#c2c2c2"></div>
<div class="abs" style="left:955.0px;top:63px;width:1px;height:92px;background:#c2c2c2"></div>
<div class="abs" style="left:1205.0px;top:63px;width:1px;height:92px;background:#c2c2c2"></div>
<div class="abs" style="left:321px;top:68px;width:59px;height:69.5px;background:#e0e0e0"></div>
<div class="abs" style="left:393px;top:68px;width:37px;height:69.5px;background:#e0e0e0"></div>
<div class="abs" style="left:432px;top:68px;width:34px;height:69.5px;background:#e0e0e0"></div>
<div class="abs" style="left:515px;top:68px;width:36px;height:70px;background:#e0e0e0"></div>
<div class="abs" style="left:553px;top:68px;width:48px;height:19.5px;background:#e0e0e0"></div>
<div class="t" style="left:-77.0px;top:142.4px;width:300px;text-align:center;font-size:12px;color:#f5b48c;font-weight:normal;">Project items</div>
<div class="t" style="left:56.0px;top:142.4px;width:300px;text-align:center;font-size:12px;color:#a8a8a8;font-weight:normal;">Data</div>
<div class="t" style="left:175.5px;top:142.4px;width:300px;text-align:center;font-size:12px;color:#a8a8a8;font-weight:normal;">Labels</div>
<div class="t" style="left:279.5px;top:142.4px;width:300px;text-align:center;font-size:12px;color:#a8a8a8;font-weight:normal;">Draw</div>
<div class="t" style="left:390.5px;top:142.4px;width:300px;text-align:center;font-size:12px;color:#a8a8a8;font-weight:normal;">View settings</div>
<div class="t" style="left:500.0px;top:142.4px;width:300px;text-align:center;font-size:12px;color:#a8a8a8;font-weight:normal;">Pictures</div>
<div class="t" style="left:597.0px;top:142.4px;width:300px;text-align:center;font-size:12px;color:#a8a8a8;font-weight:normal;">Calculation</div>
<div class="t" style="left:729.5px;top:142.4px;width:300px;text-align:center;font-size:12px;color:#a8a8a8;font-weight:normal;">Templates</div>
<div class="t" style="left:932.0px;top:142.4px;width:300px;text-align:center;font-size:12px;color:#a8a8a8;font-weight:normal;">New</div>
<div class="abs" style="left:6px;top:67px;width:59px;height:30px;background:#f37021"></div>
<div class="t" style="left:12.4px;top:77.2px;font-size:11.6px;color:#fff;font-weight:normal;font-style:normal;">DRM1</div>
<svg style="left:54px;top:80px" width="8" height="6"><path d="M0.8,1 L6.2,1 L3.5,3.8Z" fill="#fff"/></svg>
<div class="t" style="left:-63.0px;top:105.4px;width:300px;text-align:center;font-size:12px;color:#000;font-weight:normal;">New</div>
<div class="t" style="left:-27.0px;top:105.4px;width:300px;text-align:center;font-size:12px;color:#000;font-weight:normal;">Copy</div>
<div class="t" style="left:19.5px;top:105.4px;width:300px;text-align:center;font-size:12px;color:#000;font-weight:normal;">Undo</div>
<div class="t" style="left:55.5px;top:105.4px;width:300px;text-align:center;font-size:12px;color:#c8c8c8;font-weight:normal;">Redo</div>
<div class="t" style="left:92.0px;top:105.4px;width:300px;text-align:center;font-size:12px;color:#000;font-weight:normal;">Save</div>
<div class="t" style="left:146.0px;top:104.4px;width:300px;text-align:center;font-size:12px;color:#000;font-weight:normal;">Member</div>
<div class="t" style="left:146.0px;top:119.6px;width:300px;text-align:center;font-size:12px;color:#000;font-weight:normal;">names</div>
<div class="t" style="left:200.5px;top:104.4px;width:300px;text-align:center;font-size:12px;color:#000;font-weight:normal;">Dimension</div>
<div class="t" style="left:200.5px;top:119.6px;width:300px;text-align:center;font-size:12px;color:#000;font-weight:normal;">lines</div>
<div class="t" style="left:261.5px;top:104.4px;width:300px;text-align:center;font-size:12px;color:#000;font-weight:normal;">Rebars</div>
<div class="t" style="left:299.0px;top:104.4px;width:300px;text-align:center;font-size:12px;color:#000;font-weight:normal;">Grid</div>
<div class="t" style="left:345.5px;top:103.8px;width:300px;text-align:center;font-size:12px;color:#000;font-weight:normal;">Real</div>
<div class="t" style="left:345.5px;top:118.8px;width:300px;text-align:center;font-size:12px;color:#000;font-weight:normal;">3D</div>
<div class="t" style="left:383.0px;top:103.8px;width:300px;text-align:center;font-size:12px;color:#000;font-weight:normal;">Model</div>
<div class="t" style="left:481.0px;top:105.4px;width:300px;text-align:center;font-size:12px;color:#000;font-weight:normal;">New</div>
<div class="t" style="left:518.5px;top:105.4px;width:300px;text-align:center;font-size:12px;color:#000;font-weight:normal;">Gallery</div>
<div class="t" style="left:571.0px;top:105.4px;width:300px;text-align:center;font-size:12px;color:#000;font-weight:normal;">Settings</div>
<div class="t" style="left:620.0px;top:105.4px;width:300px;text-align:center;font-size:12px;color:#000;font-weight:normal;">Calculate</div>
<div class="t" style="left:675.0px;top:105.4px;width:300px;text-align:center;font-size:12px;color:#000;font-weight:normal;">Create</div>
<div class="t" style="left:711.5px;top:105.4px;width:300px;text-align:center;font-size:12px;color:#000;font-weight:normal;">Apply</div>
<div class="t" style="left:830.5px;top:104.8px;width:300px;text-align:center;font-size:12px;color:#000;font-weight:normal;">Model</div>
<div class="t" style="left:831.0px;top:119.7px;width:300px;text-align:center;font-size:12px;color:#000;font-weight:normal;">entity</div>
<div class="t" style="left:867.0px;top:104.8px;width:300px;text-align:center;font-size:12px;color:#000;font-weight:normal;">Load</div>
<div class="t" style="left:867.5px;top:119.7px;width:300px;text-align:center;font-size:12px;color:#000;font-weight:normal;">case</div>
<div class="t" style="left:921.0px;top:104.8px;width:300px;text-align:center;font-size:12px;color:#000;font-weight:normal;">Combination</div>
<div class="t" style="left:984.0px;top:104.8px;width:300px;text-align:center;font-size:12px;color:#000;font-weight:normal;">Rebar</div>
<div class="t" style="left:984.5px;top:119.7px;width:300px;text-align:center;font-size:12px;color:#000;font-weight:normal;">assembly</div>
<div class="t" style="left:1030.5px;top:104.8px;width:300px;text-align:center;font-size:12px;color:#000;font-weight:normal;">DXF</div>
<div class="t" style="left:1030.5px;top:119.7px;width:300px;text-align:center;font-size:12px;color:#000;font-weight:normal;">Import</div>
<div class="t" style="left:558.0px;top:72.6px;font-size:12px;color:#000;font-weight:normal;font-style:normal;">2D view</div>
<div class="t" style="left:558.0px;top:94.8px;font-size:12px;color:#000;font-weight:normal;font-style:normal;">3D view</div>
<div class="t" style="left:901.5px;top:73.1px;font-size:12px;color:#000;font-weight:normal;font-style:normal;">Manager</div>
<div class="t" style="left:901.5px;top:95.2px;font-size:12px;color:#000;font-weight:normal;font-style:normal;">Save</div>
<div class="t" style="left:901.5px;top:116.9px;font-size:12px;color:#000;font-weight:normal;font-style:normal;">Open</div>
<svg style="left:0;top:0" width="1920" height="160"><path d="M81.5,74.6 L88.5,74.6 M95.4,84 L95.4,100.6 L73.4,100.6 L73.4,82.6 L81.5,74.6 L81.5,82.6 L73.4,82.6" stroke="#111" stroke-width="1.6" fill="none" stroke-linejoin="miter"/><path d="M90,74.5 L101,74.5 M95.4,69 L95.4,80" stroke="#f37021" stroke-width="1.5" fill="none"/><path d="M117.4,74.6 L131.5,74.6 L131.5,100.6 L109.2,100.6 L109.2,82.6 L117.4,74.6 L117.4,82.6 L109.2,82.6" stroke="#111" stroke-width="1.6" fill="none"/><path d="M122,69.7 L136.5,69.7 L136.5,96.5" stroke="#f37021" stroke-width="1.5" fill="none"/><path d="M155,74.5 L172.5,74.5 A13,13 0 0 1 172.5,100.5 L155,100.5 M158.7,70.4 L154.6,74.5 L158.7,78.6" stroke="#111" stroke-width="1.5" fill="none"/><path d="M221,74.5 L203.3,74.5 A13,13 0 0 0 203.3,100.5 L220.5,100.5 M217.5,70.4 L221.6,74.5 L217.5,78.6" stroke="#b8b8b8" stroke-width="1.3" fill="none"/><path d="M242.5,69 L242.5,93.5 M238.3,89.3 L242.5,93.5 L246.7,89.3" stroke="#f37021" stroke-width="1.5" fill="none"/><path d="M226.8,94 L226.8,100.5 L257.2,100.5 L257.2,94" stroke="#111" stroke-width="1.6" fill="none"/><path d="M288.5,71.6 L303.5,71.6 L311.6,98.4 L303.6,98.4 L301.5,92.4 L290.5,92.4 L288.4,98.4 L280.4,98.4 Z M296,78 L292.2,87.2 L299.8,87.2 Z" stroke="#111" stroke-width="1.3" fill="none" stroke-linejoin="round"/><path d="M335.3,78 L335.3,96 M366.5,78 L366.5,96 M335.5,79.5 L366.3,79.5 M339.5,75.5 L335.5,79.5 L339.5,83.5 M362.3,75.5 L366.3,79.5 L362.3,83.5" stroke="#111" stroke-width="1.4" fill="none"/><rect x="400.4" y="69.6" width="21" height="30.8" rx="4.5" stroke="#111" stroke-width="1.6" fill="none"/><circle cx="405.2" cy="74.2" r="0.9" fill="#111"/><circle cx="417" cy="74.2" r="0.9" fill="#111"/><circle cx="405.2" cy="95.8" r="2" fill="#111"/><circle cx="417" cy="95.8" r="2" fill="#111"/><path d="M439.6,69.5 L439.6,100.5 M432.5,94.5 L465,94.5" stroke="#111" stroke-width="1.4" fill="none"/><path d="M518.6,84.4 L531.6,71.1 L548.3,71.1 L548.3,75.9 L535,89.4 L529.5,89.4 L529.5,100.4 L523.9,100.4 L523.9,89.4 L518.6,89.4 Z" stroke="#111" stroke-width="1.5" fill="none" stroke-linejoin="round"/><path d="M518.6,84.4 L535,84.4 L548.3,71.1 M535,84.4 L535,89.4 M529.5,100.4 L543.7,88.6 L543.7,81.4" stroke="#111" stroke-width="1.5" fill="none" stroke-linejoin="round"/><path d="M482.6,84.4 L495.6,71.1 L512.3,71.1 L512.3,75.9 L499,89.4 L493.5,89.4 L493.5,100.4 L487.9,100.4 L487.9,89.4 L482.6,89.4 Z" stroke="#111" stroke-width="1.5" fill="none" stroke-linejoin="round"/><path d="M482.6,84.4 L499,84.4 L512.3,71.1 M499,84.4 L499,89.4 M493.5,100.4 L507.70000000000005,88.6 L507.70000000000005,81.4" stroke="#111" stroke-width="1.5" fill="none" stroke-linejoin="round"/><circle cx="506.5" cy="76.5" r="7" fill="#fff"/><rect x="502" y="66" width="13" height="13.5" fill="#fff"/><circle cx="506.5" cy="76.5" r="5.5" fill="#f37021"/><path d="M501,76.5 L512,76.5 M506.5,71 L506.5,82 M503.6,71.6 Q501.8,76.5 503.6,81.4 M509.4,71.6 Q511.2,76.5 509.4,81.4" stroke="#fff" stroke-width="0.9" fill="none"/><path d="M631.5,74.6 L615.4,74.6 L615.4,100.5 L641.7,100.5 L641.7,84" stroke="#111" stroke-width="1.6" fill="none"/><path d="M615.6,99.5 L623.8,91.7 L627.4,95.3 L635.2,87.5 L641.5,92.8" stroke="#111" stroke-width="1.3" fill="none"/><circle cx="627.5" cy="82.6" r="1.9" fill="#111"/><path d="M636.3,74.5 L646.7,74.5 M641.5,69.3 L641.5,79.7" stroke="#f37021" stroke-width="1.5" fill="none"/><rect x="652.4" y="74.6" width="26.2" height="25.9" stroke="#111" stroke-width="1.6" fill="none"/><path d="M652.6,99.5 L660.8,91.7 L664.4,95.3 L672.2,87.5 L678.5,92.8" stroke="#111" stroke-width="1.3" fill="none"/><circle cx="664.5" cy="82.6" r="1.9" fill="#111"/><path d="M656,69.6 L683.6,69.6 L683.6,96.5" stroke="#111" stroke-width="1.6" fill="none"/><path d="M732.78,81.47 L736.79,81.84 L736.79,87.96 L732.78,88.33 L731.96,90.31 L734.54,93.41 L730.21,97.74 L727.11,95.16 L725.13,95.98 L724.76,99.99 L718.64,99.99 L718.27,95.98 L716.29,95.16 L713.19,97.74 L708.86,93.41 L711.44,90.31 L710.62,88.33 L706.61,87.96 L706.61,81.84 L710.62,81.47 L711.44,79.49 L708.86,76.39 L713.19,72.06 L716.29,74.64 L718.27,73.82 L718.64,69.81 L724.76,69.81 L725.13,73.82 L727.11,74.64 L730.21,72.06 L734.54,76.39 L731.96,79.49Z" stroke="#111" stroke-width="1.3" fill="none" stroke-linejoin="round" transform="rotate(0 721.7 84.9)"/><path d="M716,80.6 L712.6,84.9 L716,89.2 M727.4,80.6 L730.8,84.9 L727.4,89.2 M723.6,77.5 L720,92.5" stroke="#111" stroke-width="1.3" fill="none"/><rect x="754.6" y="69.4" width="31" height="31" stroke="#111" stroke-width="1.6" fill="none"/><path d="M758.2,77.6 L766.8,77.6 M762.5,73.3 L762.5,81.9 M774.2,73.5 L781.8,81.1 M781.8,73.5 L774.2,81.1 M758.2,91.5 L766.8,91.5 M774,88.6 L782,88.6 M774,94.5 L782,94.5" stroke="#f37021" stroke-width="1.3" fill="none"/><circle cx="762.5" cy="88" r="0.9" fill="#f37021"/><circle cx="762.5" cy="95" r="0.9" fill="#f37021"/><path d="M810.4,69.3 L810.4,100.5 M816.5,69.3 L816.5,100.5 M816.5,84.3 L833,84.3 M816.5,88.5 L833,88.5" stroke="#111" stroke-width="1.4" fill="none"/><circle cx="835.8" cy="74" r="4.2" stroke="#f37021" stroke-width="1.5" fill="none"/><path d="M838.9,77.1 L841.8,80" stroke="#f37021" stroke-width="1.5" fill="none"/><path d="M846.4,69.3 L846.4,100.5 M852.4,69.3 L852.4,100.5 M852.4,84.3 L869,84.3 M852.4,88.5 L869,88.5" stroke="#111" stroke-width="1.4" fill="none"/><path d="M873.3,69.5 L873.3,79.7 M869,73.8 L873.3,69.5 L877.6,73.8" stroke="#f37021" stroke-width="1.5" fill="none"/><path d="M881.6,70 L881.6,85.7 M884.5,70 L884.5,85.7 M884.5,77.3 L892.5,77.3 M884.5,79.8 L892.5,79.8" stroke="#444" stroke-width="0.9" fill="none"/><path d="M892.5,74.5 L895.8,70.8 L896.8,71.8 L893.5,75.5 Z" stroke="#f37021" stroke-width="0.9" fill="none"/><path d="M889.5,92.3 L889.5,104.2 M887,101.7 L889.5,104.2 L892,101.7" stroke="#f37021" stroke-width="1.1" fill="none"/><path d="M881.6,104.2 L881.6,107.2 L896.8,107.2 L896.8,104.2" stroke="#555" stroke-width="1" fill="none"/><path d="M889,126.3 L889,114.6 M886.5,117.1 L889,114.6 L891.5,117.1" stroke="#f8b890" stroke-width="1.3" fill="none"/><path d="M881.6,126.2 L881.6,129.2 L896.8,129.2 L896.8,126.2" stroke="#555" stroke-width="1" fill="none"/><path d="M965.3,80.4 L979.4,80.4 L996.6,88.6 L981.5,88.6 Z M965.3,80.4 L965.3,89.9 L981.5,100.5 L996.6,100.5 L996.6,88.6 M981.5,88.6 L981.5,100.5" stroke="#111" stroke-width="1.4" fill="none" stroke-linejoin="round"/><path d="M986.6,74.5 L996.6,74.5 M991.6,69.5 L991.6,79.5" stroke="#f37021" stroke-width="1.5" fill="none"/><path d="M1001,100.5 L1032.8,100.5 M1008.5,74 L1008.5,100 M1016.6,74 L1016.6,100 M1024.5,82.3 L1024.5,100 M1005.3,96 L1008.5,100 L1012.5,95.5 L1016.6,100 L1020.5,95.5 L1024.5,100 L1028,96" stroke="#111" stroke-width="1.3" fill="none"/><path d="M1022.4,74.5 L1032.4,74.5 M1027.4,69.5 L1027.4,79.5" stroke="#f37021" stroke-width="1.5" fill="none"/><path d="M1072,74.4 L1056.5,74.4 L1066,87.5 L1056.5,100.5 L1072,100.5" stroke="#111" stroke-width="1.4" fill="none"/><path d="M1077.3,74.5 L1087.3,74.5 M1082.3,69.5 L1082.3,79.5" stroke="#f37021" stroke-width="1.5" fill="none"/><path d="M1135.5,69.4 L1123.5,69.4 Q1119.2,69.4 1119.2,73.7 L1119.2,96.3 Q1119.2,100.6 1123.5,100.6 L1136.2,100.6 Q1140.5,100.6 1140.5,96.3 L1140.5,80.5" stroke="#111" stroke-width="1.6" fill="none"/><circle cx="1124" cy="74" r="0.8" fill="#111"/><circle cx="1136" cy="74" r="0.8" fill="#111"/><circle cx="1124" cy="96" r="2" fill="#111"/><circle cx="1136" cy="96" r="2" fill="#111"/><path d="M1140.3,74.5 L1150.3,74.5 M1145.3,69.5 L1145.3,79.5" stroke="#f37021" stroke-width="1.5" fill="none"/><path d="M1188.5,69.4 L1173.4,69.4 L1165.3,77 L1165.3,100.5 L1193,100.5 L1193,82.5 M1173.4,69.4 L1173.4,77 L1165.3,77" stroke="#111" stroke-width="1.4" fill="none"/><text x="0" y="0" text-anchor="middle" font-family="Liberation Sans" font-size="14" fill="#333" stroke="#333" stroke-width="0.3" transform="translate(1178.5 93.8) scale(0.7 1)">DXF</text><path d="M1192.6,69 L1192.6,79.5 M1189,75.9 L1192.6,79.5 L1196.2,75.9" stroke="#f37021" stroke-width="1.5" fill="none"/></svg>
<svg style="left:0;top:0" width="1440" height="1127"><defs><clipPath id="cc"><rect x="0" y="158" width="1440" height="969"/></clipPath></defs><g clip-path="url(#cc)"><line x1="60.5" y1="183" x2="60.5" y2="1016" stroke="#b4b4b4" stroke-width="1" stroke-dasharray="1 2.79"/><line x1="258.5" y1="183" x2="258.5" y2="1016" stroke="#b4b4b4" stroke-width="1" stroke-dasharray="1 2.79"/><line x1="357.5" y1="188" x2="357.5" y2="1014" stroke="#c4c4c4" stroke-width="1" stroke-dasharray="11.5 5 1 5"/><line x1="456.5" y1="183" x2="456.5" y2="1016" stroke="#b4b4b4" stroke-width="1" stroke-dasharray="1 2.79"/><line x1="556.5" y1="188" x2="556.5" y2="1014" stroke="#c4c4c4" stroke-width="1" stroke-dasharray="11.5 5 1 5"/><line x1="655.5" y1="183" x2="655.5" y2="1016" stroke="#b4b4b4" stroke-width="1" stroke-dasharray="1 2.79"/><line x1="754.5" y1="188" x2="754.5" y2="1014" stroke="#c4c4c4" stroke-width="1" stroke-dasharray="11.5 5 1 5"/><line x1="853.5" y1="183" x2="853.5" y2="1016" stroke="#b4b4b4" stroke-width="1" stroke-dasharray="1 2.79"/><line x1="952.5" y1="188" x2="952.5" y2="1014" stroke="#c4c4c4" stroke-width="1" stroke-dasharray="11.5 5 1 5"/><line x1="1051.5" y1="183" x2="1051.5" y2="1016" stroke="#b4b4b4" stroke-width="1" stroke-dasharray="1 2.79"/><line x1="1151.5" y1="188" x2="1151.5" y2="1014" stroke="#c4c4c4" stroke-width="1" stroke-dasharray="11.5 5 1 5"/><line x1="1250.5" y1="183" x2="1250.5" y2="1016" stroke="#b4b4b4" stroke-width="1" stroke-dasharray="1 2.79"/><line x1="40" y1="995.5" x2="1270" y2="995.5" stroke="#b4b4b4" stroke-width="1" stroke-dasharray="1 2.79"/><line x1="40" y1="797.5" x2="1270" y2="797.5" stroke="#b4b4b4" stroke-width="1" stroke-dasharray="1 2.79"/><line x1="40" y1="698.5" x2="1270" y2="698.5" stroke="#c4c4c4" stroke-width="1" stroke-dasharray="11.5 5 1 5"/><line x1="40" y1="599.5" x2="1270" y2="599.5" stroke="#b4b4b4" stroke-width="1" stroke-dasharray="1 2.79"/><line x1="40" y1="499.5" x2="1270" y2="499.5" stroke="#c4c4c4" stroke-width="1" stroke-dasharray="11.5 5 1 5"/><line x1="40" y1="400.5" x2="1270" y2="400.5" stroke="#b4b4b4" stroke-width="1" stroke-dasharray="1 2.79"/><line x1="40" y1="301.5" x2="1270" y2="301.5" stroke="#c4c4c4" stroke-width="1" stroke-dasharray="11.5 5 1 5"/><line x1="40" y1="202.5" x2="1270" y2="202.5" stroke="#b4b4b4" stroke-width="1" stroke-dasharray="1 2.79"/><line x1="40" y1="896.5" x2="1280" y2="896.5" stroke="#2a2a2a" stroke-width="1.1" stroke-dasharray="11.5 5 1 5"/><line x1="159.5" y1="1016" x2="159.5" y2="175" stroke="#2a2a2a" stroke-width="1.1" stroke-dasharray="11.5 5 1 5" /><path d="M1270,892.0 L1290,896.5 L1270,901.0Z" fill="#000"/><path d="M155.0,181 L159.5,162.5 L164.0,181Z" fill="#000"/><text x="1293" y="897" font-family="Liberation Sans" font-size="13" fill="#111">x</text><text x="156" y="160" font-family="Liberation Sans" font-size="12" fill="#111">z</text><text x="159.5" y="1024" text-anchor="middle" font-family="Liberation Sans" font-size="9.5" fill="#111">0.00</text><text x="357.8" y="1024" text-anchor="middle" font-family="Liberation Sans" font-size="9.5" fill="#111">1.00</text><text x="556.1" y="1024" text-anchor="middle" font-family="Liberation Sans" font-size="9.5" fill="#111">2.00</text><text x="754.4" y="1024" text-anchor="middle" font-family="Liberation Sans" font-size="9.5" fill="#111">3.00</text><text x="952.7" y="1024" text-anchor="middle" font-family="Liberation Sans" font-size="9.5" fill="#111">4.00</text><text x="1151.0" y="1024" text-anchor="middle" font-family="Liberation Sans" font-size="9.5" fill="#111">5.00</text><text x="39.5" y="900.0" text-anchor="end" font-family="Liberation Sans" font-size="9.5" fill="#111">0.00</text><text x="39.5" y="701.7" text-anchor="end" font-family="Liberation Sans" font-size="9.5" fill="#111">1.00</text><text x="39.5" y="503.4" text-anchor="end" font-family="Liberation Sans" font-size="9.5" fill="#111">2.00</text><text x="39.5" y="305.1" text-anchor="end" font-family="Liberation Sans" font-size="9.5" fill="#111">3.00</text><path d="M159.5,301.5999999999999 L1151.0,301.5999999999999 L1151.0,896.5 L952.7,896.5 L952.7,499.9 L754.4000000000001,499.9 L754.4000000000001,896.5 L159.5,896.5Z" fill="#c8c8c8" stroke="#000" stroke-width="2.2"/><path d="M754.4000000000001,896.5 L754.4000000000001,499.9 L952.7,499.9" fill="none" stroke="#606060" stroke-width="2.2"/><path d="M754.7,521.9 L754.7,896.5" fill="none" stroke="#000" stroke-width="1.3" stroke-dasharray="12 10.5"/><path d="M778.4000000000001,499.9 L952.7,499.9" fill="none" stroke="#000" stroke-width="1.8" stroke-dasharray="11 11.4"/><path d="M952.7,499.9 L952.7,896.5" fill="none" stroke="#555" stroke-width="2.2"/><path d="M952.7,511.9 L952.7,896.5" fill="none" stroke="#000" stroke-width="2.2" stroke-dasharray="19 3.5"/><line x1="754.4000000000001" y1="896.5" x2="952.7" y2="896.5" stroke="#6a6a6a" stroke-width="1.1"/><line x1="754.4000000000001" y1="896.5" x2="952.7" y2="896.5" stroke="#333" stroke-width="1.1" stroke-dasharray="11.5 11"/><line x1="258.65" y1="896.5" x2="357.8" y2="896.5" stroke="#0c0c6e" stroke-width="2.4"/><path d="M258.65,896.5 L245.64999999999998,913.7 L271.65,913.7Z" fill="none" stroke="#0c0c6e" stroke-width="2" stroke-linejoin="miter"/><line x1="258.65" y1="924.5" x2="258.65" y2="944" stroke="#0c0c6e" stroke-width="2" stroke-linecap="round"/><path d="M258.65,916.5 L256.04999999999995,929.5 L261.25,929.5Z" fill="#0c0c6e"/><path d="M308.225,896.5 L295.225,913.7 L321.225,913.7Z" fill="none" stroke="#0c0c6e" stroke-width="2" stroke-linejoin="miter"/><line x1="308.225" y1="924.5" x2="308.225" y2="944" stroke="#0c0c6e" stroke-width="2" stroke-linecap="round"/><path d="M308.225,916.5 L305.625,929.5 L310.82500000000005,929.5Z" fill="#0c0c6e"/><path d="M357.8,896.5 L344.8,913.7 L370.8,913.7Z" fill="none" stroke="#0c0c6e" stroke-width="2" stroke-linejoin="miter"/><line x1="357.8" y1="924.5" x2="357.8" y2="944" stroke="#0c0c6e" stroke-width="2" stroke-linecap="round"/><path d="M357.8,916.5 L355.2,929.5 L360.40000000000003,929.5Z" fill="#0c0c6e"/><line x1="615.5899999999999" y1="896.5" x2="714.74" y2="896.5" stroke="#0c0c6e" stroke-width="2.4"/><path d="M615.5899999999999,896.5 L602.5899999999999,913.7 L628.5899999999999,913.7Z" fill="none" stroke="#0c0c6e" stroke-width="2" stroke-linejoin="miter"/><line x1="602.5899999999999" y1="917.7" x2="628.5899999999999" y2="917.7" stroke="#0c0c6e" stroke-width="2"/><line x1="615.5899999999999" y1="929.2" x2="615.5899999999999" y2="953.5" stroke="#0c0c6e" stroke-width="2" stroke-linecap="round"/><path d="M615.5899999999999,921.2 L612.9899999999999,934.2 L618.1899999999999,934.2Z" fill="#0c0c6e"/><path d="M665.165,896.5 L652.165,913.7 L678.165,913.7Z" fill="none" stroke="#0c0c6e" stroke-width="2" stroke-linejoin="miter"/><line x1="652.165" y1="917.7" x2="678.165" y2="917.7" stroke="#0c0c6e" stroke-width="2"/><line x1="665.165" y1="929.2" x2="665.165" y2="953.5" stroke="#0c0c6e" stroke-width="2" stroke-linecap="round"/><path d="M665.165,921.2 L662.5649999999999,934.2 L667.765,934.2Z" fill="#0c0c6e"/><path d="M714.74,896.5 L701.74,913.7 L727.74,913.7Z" fill="none" stroke="#0c0c6e" stroke-width="2" stroke-linejoin="miter"/><line x1="701.74" y1="917.7" x2="727.74" y2="917.7" stroke="#0c0c6e" stroke-width="2"/><line x1="714.74" y1="929.2" x2="714.74" y2="953.5" stroke="#0c0c6e" stroke-width="2" stroke-linecap="round"/><path d="M714.74,921.2 L712.14,934.2 L717.34,934.2Z" fill="#0c0c6e"/><line x1="952.7" y1="896.5" x2="1151.0" y2="896.5" stroke="#0c0c6e" stroke-width="2.4"/><path d="M952.7,896.5 L939.7,913.7 L965.7,913.7Z" fill="none" stroke="#0c0c6e" stroke-width="2" stroke-linejoin="miter"/><line x1="939.7" y1="917.7" x2="965.7" y2="917.7" stroke="#0c0c6e" stroke-width="2"/><line x1="952.7" y1="929.2" x2="952.7" y2="953.5" stroke="#0c0c6e" stroke-width="2" stroke-linecap="round"/><path d="M952.7,921.2 L950.1,934.2 L955.3000000000001,934.2Z" fill="#0c0c6e"/><path d="M1002.2750000000001,896.5 L989.2750000000001,913.7 L1015.2750000000001,913.7Z" fill="none" stroke="#0c0c6e" stroke-width="2" stroke-linejoin="miter"/><line x1="989.2750000000001" y1="917.7" x2="1015.2750000000001" y2="917.7" stroke="#0c0c6e" stroke-width="2"/><line x1="1002.2750000000001" y1="929.2" x2="1002.2750000000001" y2="953.5" stroke="#0c0c6e" stroke-width="2" stroke-linecap="round"/><path d="M1002.2750000000001,921.2 L999.6750000000001,934.2 L1004.8750000000001,934.2Z" fill="#0c0c6e"/><path d="M1051.85,896.5 L1038.85,913.7 L1064.85,913.7Z" fill="none" stroke="#0c0c6e" stroke-width="2" stroke-linejoin="miter"/><line x1="1038.85" y1="917.7" x2="1064.85" y2="917.7" stroke="#0c0c6e" stroke-width="2"/><line x1="1051.85" y1="929.2" x2="1051.85" y2="953.5" stroke="#0c0c6e" stroke-width="2" stroke-linecap="round"/><path d="M1051.85,921.2 L1049.25,934.2 L1054.4499999999998,934.2Z" fill="#0c0c6e"/><path d="M1101.4250000000002,896.5 L1088.4250000000002,913.7 L1114.4250000000002,913.7Z" fill="none" stroke="#0c0c6e" stroke-width="2" stroke-linejoin="miter"/><line x1="1088.4250000000002" y1="917.7" x2="1114.4250000000002" y2="917.7" stroke="#0c0c6e" stroke-width="2"/><line x1="1101.4250000000002" y1="929.2" x2="1101.4250000000002" y2="953.5" stroke="#0c0c6e" stroke-width="2" stroke-linecap="round"/><path d="M1101.4250000000002,921.2 L1098.8250000000003,934.2 L1104.025,934.2Z" fill="#0c0c6e"/><path d="M1151.0,896.5 L1138.0,913.7 L1164.0,913.7Z" fill="none" stroke="#0c0c6e" stroke-width="2" stroke-linejoin="miter"/><line x1="1138.0" y1="917.7" x2="1164.0" y2="917.7" stroke="#0c0c6e" stroke-width="2"/><line x1="1151.0" y1="929.2" x2="1151.0" y2="953.5" stroke="#0c0c6e" stroke-width="2" stroke-linecap="round"/><path d="M1151.0,921.2 L1148.4,934.2 L1153.6,934.2Z" fill="#0c0c6e"/><line x1="744.5" y1="400.8" x2="744.5" y2="896.5" stroke="#ff6a10" stroke-width="3" stroke-linecap="round"/><circle cx="754.4000000000001" cy="499.9" r="4.6" fill="none" stroke="#f37021" stroke-width="1.6"/><circle cx="853.5500000000001" cy="499.9" r="4.2" fill="none" stroke="#777" stroke-width="1"/><circle cx="952.7" cy="499.9" r="4.2" fill="none" stroke="#777" stroke-width="1"/><circle cx="754.4000000000001" cy="698.2" r="4.2" fill="none" stroke="#777" stroke-width="1"/><circle cx="853.5500000000001" cy="698.2" r="4.2" fill="none" stroke="#777" stroke-width="1"/><circle cx="952.7" cy="698.2" r="4.2" fill="none" stroke="#777" stroke-width="1"/><circle cx="754.4000000000001" cy="896.5" r="4.6" fill="none" stroke="#f37021" stroke-width="1.6"/><circle cx="853.5500000000001" cy="896.5" r="4.2" fill="none" stroke="#777" stroke-width="1"/><circle cx="952.7" cy="896.5" r="4.2" fill="none" stroke="#777" stroke-width="1"/><text x="753.5" y="517" text-anchor="start" font-family="Liberation Sans" font-size="19" fill="#f37021" stroke="#f37021" stroke-width="0.25">4</text><text x="853.6" y="517" text-anchor="middle" font-family="Liberation Sans" font-size="19" fill="#6a6a6a" stroke="#6a6a6a" stroke-width="0.25">7</text><text x="952.5" y="517" text-anchor="end" font-family="Liberation Sans" font-size="19" fill="#6a6a6a" stroke="#6a6a6a" stroke-width="0.25">3</text><text x="753.5" y="705" text-anchor="start" font-family="Liberation Sans" font-size="19" fill="#6a6a6a" stroke="#6a6a6a" stroke-width="0.25">8</text><text x="853.6" y="693.7" text-anchor="middle" font-family="Liberation Sans" font-size="19" fill="#6a6a6a" stroke="#6a6a6a" stroke-width="0.25">0=9</text><text x="952.5" y="705" text-anchor="end" font-family="Liberation Sans" font-size="19" fill="#6a6a6a" stroke="#6a6a6a" stroke-width="0.25">6</text><text x="754.5" y="892" text-anchor="start" font-family="Liberation Sans" font-size="19" fill="#7a6a5e" stroke="#7a6a5e" stroke-width="0.25">1</text><text x="853.6" y="892" text-anchor="middle" font-family="Liberation Sans" font-size="19" fill="#6a6a6a" stroke="#6a6a6a" stroke-width="0.25">5</text><text x="952.5" y="892" text-anchor="end" font-family="Liberation Sans" font-size="19" fill="#6a6a6a" stroke="#6a6a6a" stroke-width="0.25">2</text></g></svg>
<div class="abs" style="left:2px;top:161px;width:24px;height:24px;border:1px solid #b4b4b4;background:#f0f0f0"></div>
<div class="abs" style="left:4px;top:163px;width:20px;height:20px;background:linear-gradient(#e6e6e6,#d0d0d0)"></div>
<svg style="left:2px;top:161px" width="24" height="24"><path d="M6,6 L9.5,9.5 M18,6 L14.5,9.5 M6,18 L9.5,14.5 M18,18 L14.5,14.5" stroke="#666" stroke-width="1.3"/><path d="M5,5 L8.6,5.3 L5.3,8.6Z M19,5 L15.4,5.3 L18.7,8.6Z M5,19 L8.6,18.7 L5.3,15.4Z M19,19 L15.4,18.7 L18.7,15.4Z" fill="#666" stroke="#666" stroke-width="0.6"/></svg>
<div class="abs" style="left:1440px;top:158px;width:6px;height:969px;background:#c8c8c8"></div>
<div class="abs" style="left:1446px;top:158px;width:474px;height:25px;background:#f37021"></div>
<div class="t" style="left:1456.0px;top:164.7px;font-size:12.5px;color:#fff;font-weight:bold;font-style:normal;">GB4</div>
<div class="t" style="left:1685.0px;top:164.7px;font-size:12.5px;color:#fff;font-weight:bold;font-style:normal;">DXF Import</div>
<div class="t" style="left:1770.0px;top:164.7px;font-size:12.5px;color:#fff;font-weight:bold;font-style:normal;">New</div>
<div class="t" style="left:1815.0px;top:164.7px;font-size:12.5px;color:#fff;font-weight:bold;font-style:normal;">Copy</div>
<div class="t" style="left:1863.0px;top:164.7px;font-size:12.5px;color:#fff;font-weight:bold;font-style:normal;">Delete</div>
<svg style="left:1462px;top:200px" width="12" height="10"><path d="M0.5,0.5 L10.5,0.5 L5.5,7Z" fill="#f37021"/></svg>
<div class="t" style="left:1490.0px;top:197.6px;font-size:14px;color:#f37021;font-weight:bold;font-style:normal;letter-spacing:-0.1px">Group of reinforcement bars</div>
<div class="t" style="left:1490.0px;top:224.7px;font-size:12px;color:#111;font-weight:normal;font-style:normal;">nl - Number of layers</div>
<div class="abs" style="left:1673px;top:219.5px;width:235px;height:21px;background:#efefef"></div>
<div class="t" style="left:1679.0px;top:224.4px;font-size:12px;color:#111;font-weight:normal;font-style:normal;">1</div>
<svg style="left:1462px;top:253px" width="12" height="10"><path d="M0.5,0.5 L10.5,0.5 L5.5,7Z" fill="#f37021"/></svg>
<div class="t" style="left:1490.0px;top:250.6px;font-size:14px;color:#f37021;font-weight:bold;font-style:normal;letter-spacing:-0.1px">Single reinforcement bar</div>
<div class="t" style="left:1490.0px;top:277.7px;font-size:12px;color:#111;font-weight:normal;font-style:normal;">Φ - Diameter [mm]</div>
<div class="abs" style="left:1675px;top:272.5px;width:212px;height:21px;background:#efefef"></div>
<div class="t" style="left:1681.0px;top:277.4px;font-size:12px;color:#111;font-weight:normal;font-style:normal;">12</div>
<div class="abs" style="left:1887px;top:272px;width:21px;height:22px;background:#a5a5a5"></div>
<svg style="left:1887px;top:272px" width="21" height="22"><path d="M7,8 L14,8 L10.5,4.5Z M7,14 L14,14 L10.5,17.5Z" fill="#e8e8e8"/></svg>
<div class="t" style="left:1490.0px;top:301.7px;font-size:12px;color:#111;font-weight:normal;font-style:normal;">Material</div>
<div class="abs" style="left:1674px;top:296.5px;width:210px;height:21px;background:#e2e2e2"></div>
<div class="t" style="left:1680.0px;top:301.4px;font-size:12px;color:#111;font-weight:normal;font-style:normal;">B 500B</div>
<svg style="left:1871px;top:304px" width="10" height="7"><path d="M0.5,0.5 L8.5,0.5 L4.5,5.5Z" fill="#111"/></svg>
<div class="abs" style="left:1887px;top:296px;width:21px;height:22px;background:#a5a5a5"></div>
<svg style="left:1887px;top:296px" width="21" height="22"><path d="M5.5,10 A5,5 0 0 1 15,8.5 M15.5,12 A5,5 0 0 1 6,13.5" stroke="#3cb371" stroke-width="1.6" fill="none"/><path d="M13,6 L16,9 L17,5Z M8,16 L5,13 L4,17Z" fill="#3cb371"/></svg>
<div class="t" style="left:1490.0px;top:325.7px;font-size:12px;color:#111;font-weight:normal;font-style:normal;">n - Number of bars in layer</div>
<div class="abs" style="left:1673px;top:320.5px;width:235px;height:21px;background:#efefef"></div>
<div class="t" style="left:1679.0px;top:325.4px;font-size:12px;color:#111;font-weight:normal;font-style:normal;">3</div>
<svg style="left:1462px;top:354px" width="12" height="10"><path d="M0.5,0.5 L10.5,0.5 L5.5,7Z" fill="#f37021"/></svg>
<div class="t" style="left:1490.0px;top:351.6px;font-size:14px;color:#f37021;font-weight:bold;font-style:normal;letter-spacing:-0.1px">Shape definition</div>
<div class="t" style="left:1490.0px;top:378.7px;font-size:12px;color:#111;font-weight:normal;font-style:normal;">Definition of bar shape</div>
<div class="abs" style="left:1670px;top:369px;width:239px;height:30px;border:3.5px solid #fe0000;border-radius:7px;background:#e2e2e2"></div>
<div class="t" style="left:1680.0px;top:378.1px;font-size:12px;color:#111;font-weight:normal;font-style:normal;">By two points</div>
<svg style="left:1895px;top:380px" width="10" height="7"><path d="M0.5,0.5 L8.5,0.5 L4.5,5.5Z" fill="#111"/></svg>
<div class="t" style="left:1490.0px;top:403.2px;font-size:12px;color:#111;font-weight:normal;font-style:normal;">Anchorage type at the beginning</div>
<svg style="left:1673px;top:399px" width="160" height="19.5"><rect x="0.50" y="0.5" width="21.94" height="18.5" fill="#f37021" stroke="#b0b0b0" stroke-width="1"/><rect x="22.44" y="0.5" width="21.94" height="18.5" fill="#fff" stroke="#b0b0b0" stroke-width="1"/><rect x="44.38" y="0.5" width="21.94" height="18.5" fill="#fff" stroke="#b0b0b0" stroke-width="1"/><rect x="66.32" y="0.5" width="21.94" height="18.5" fill="#fff" stroke="#b0b0b0" stroke-width="1"/><rect x="88.26" y="0.5" width="21.94" height="18.5" fill="#fff" stroke="#b0b0b0" stroke-width="1"/><rect x="110.20" y="0.5" width="21.94" height="18.5" fill="#fff" stroke="#b0b0b0" stroke-width="1"/><rect x="132.14" y="0.5" width="21.94" height="18.5" fill="#fff" stroke="#b0b0b0" stroke-width="1"/><rect x="0" y="0" width="22.4" height="19.5" fill="#f37021"/><path d="M2,13.3 L20,13.3" stroke="#111" stroke-width="2.6" fill="none" stroke-linecap="butt"/><path d="M24.6,6.800000000000001 Q25,13.3 30.5,13.3 L42,13.3" stroke="#111" stroke-width="2.6" fill="none" stroke-linecap="butt"/><path d="M55.5,5.300000000000001 L49,10.3 Q47,13.3 51.5,13.3 L64,13.3" stroke="#111" stroke-width="2.6" fill="none" stroke-linecap="butt"/><path d="M85.5,6.800000000000001 L73.5,6.800000000000001 Q68.8,6.800000000000001 68.8,10.05 Q68.8,13.3 73.5,13.3 L85.5,13.3" stroke="#111" stroke-width="2.6" fill="none" stroke-linecap="butt"/><path d="M90.5,13.3 L108.5,13.3 M101.5,13.3 L101.5,9.3" stroke="#111" stroke-width="2.6" fill="none" stroke-linecap="butt"/><circle cx="101.5" cy="8.0" r="2" fill="#111"/><path d="M113,8.3 L124,8.3" stroke="#111" stroke-width="3.2"/><path d="M128,1.3000000000000007 L128.6,15.9 Q125,8.5 121.5,7.700000000000001 Q125.5,6.300000000000001 128,1.3000000000000007Z" fill="#111" stroke="#111" stroke-width="0.8"/><path d="M135,8.3 L144,8.3" stroke="#111" stroke-width="2"/><path d="M151.5,2.8000000000000007 L144.8,2.8000000000000007 L144.8,13.3 L151.5,13.3" fill="#d8d8d8" stroke="#444" stroke-width="1.6"/></svg>
<div class="t" style="left:1490.0px;top:426.7px;font-size:12px;color:#111;font-weight:normal;font-style:normal;">Anchorage type at the end</div>
<svg style="left:1673px;top:421px" width="160" height="22"><rect x="0.50" y="0.5" width="21.94" height="21" fill="#f37021" stroke="#b0b0b0" stroke-width="1"/><rect x="22.44" y="0.5" width="21.94" height="21" fill="#fff" stroke="#b0b0b0" stroke-width="1"/><rect x="44.38" y="0.5" width="21.94" height="21" fill="#fff" stroke="#b0b0b0" stroke-width="1"/><rect x="66.32" y="0.5" width="21.94" height="21" fill="#fff" stroke="#b0b0b0" stroke-width="1"/><rect x="88.26" y="0.5" width="21.94" height="21" fill="#fff" stroke="#b0b0b0" stroke-width="1"/><rect x="110.20" y="0.5" width="21.94" height="21" fill="#fff" stroke="#b0b0b0" stroke-width="1"/><rect x="132.14" y="0.5" width="21.94" height="21" fill="#fff" stroke="#b0b0b0" stroke-width="1"/><rect x="0" y="0" width="22.4" height="22" fill="#f37021"/><path d="M2,15.3 L20,15.3" stroke="#111" stroke-width="2.6" fill="none" stroke-linecap="butt"/><path d="M24.6,8.8 Q25,15.3 30.5,15.3 L42,15.3" stroke="#111" stroke-width="2.6" fill="none" stroke-linecap="butt"/><path d="M55.5,7.300000000000001 L49,12.3 Q47,15.3 51.5,15.3 L64,15.3" stroke="#111" stroke-width="2.6" fill="none" stroke-linecap="butt"/><path d="M85.5,8.8 L73.5,8.8 Q68.8,8.8 68.8,12.05 Q68.8,15.3 73.5,15.3 L85.5,15.3" stroke="#111" stroke-width="2.6" fill="none" stroke-linecap="butt"/><path d="M90.5,15.3 L108.5,15.3 M101.5,15.3 L101.5,11.3" stroke="#111" stroke-width="2.6" fill="none" stroke-linecap="butt"/><circle cx="101.5" cy="10.0" r="2" fill="#111"/><path d="M113,10.3 L124,10.3" stroke="#111" stroke-width="3.2"/><path d="M128,3.3000000000000007 L128.6,17.900000000000002 Q125,10.5 121.5,9.700000000000001 Q125.5,8.3 128,3.3000000000000007Z" fill="#111" stroke="#111" stroke-width="0.8"/><path d="M135,10.3 L144,10.3" stroke="#111" stroke-width="2"/><path d="M151.5,4.800000000000001 L144.8,4.800000000000001 L144.8,15.3 L151.5,15.3" fill="#d8d8d8" stroke="#444" stroke-width="1.6"/></svg>
<div class="abs" style="left:1455px;top:447px;width:463px;height:260px;border:3.5px solid #fe0000;border-radius:9px"></div>
<svg style="left:1462px;top:455px" width="12" height="10"><path d="M0.5,0.5 L10.5,0.5 L5.5,7Z" fill="#f37021"/></svg>
<div class="t" style="left:1490.0px;top:452.6px;font-size:14px;color:#f37021;font-weight:bold;font-style:normal;letter-spacing:-0.1px">Begin position</div>
<div class="t" style="left:1490.0px;top:479.7px;font-size:12px;color:#111;font-weight:normal;font-style:normal;">M - Master</div>
<div class="abs" style="left:1673px;top:474.5px;width:235px;height:21px;background:#e2e2e2"></div>
<div class="t" style="left:1679.0px;top:479.4px;font-size:12px;color:#111;font-weight:normal;font-style:normal;">O2</div>
<svg style="left:1895px;top:482px" width="10" height="7"><path d="M0.5,0.5 L8.5,0.5 L4.5,5.5Z" fill="#111"/></svg>
<div class="t" style="left:1490.0px;top:503.7px;font-size:12px;color:#111;font-weight:normal;font-style:normal;">Master point</div>
<div class="abs" style="left:1673px;top:498.5px;width:235px;height:21px;background:#e2e2e2"></div>
<div class="t" style="left:1679.0px;top:503.4px;font-size:12px;color:#111;font-weight:normal;font-style:normal;">1</div>
<svg style="left:1895px;top:506px" width="10" height="7"><path d="M0.5,0.5 L8.5,0.5 L4.5,5.5Z" fill="#111"/></svg>
<div class="t" style="left:1490.0px;top:527.7px;font-size:12px;color:#111;font-weight:normal;font-style:normal;">X [m]</div>
<div class="abs" style="left:1672px;top:522.5px;width:236px;height:21px;background:#efefef"></div>
<div class="t" style="left:1678.0px;top:527.4px;font-size:12px;color:#111;font-weight:normal;font-style:normal;">-0.05</div>
<div class="t" style="left:1490.0px;top:551.7px;font-size:12px;color:#111;font-weight:normal;font-style:normal;">Z [m]</div>
<div class="abs" style="left:1672px;top:546.5px;width:236px;height:21px;background:#efefef"></div>
<div class="t" style="left:1678.0px;top:551.4px;font-size:12px;color:#111;font-weight:normal;font-style:normal;">0.00</div>
<svg style="left:1462px;top:580px" width="12" height="10"><path d="M0.5,0.5 L10.5,0.5 L5.5,7Z" fill="#f37021"/></svg>
<div class="t" style="left:1490.0px;top:577.6px;font-size:14px;color:#f37021;font-weight:bold;font-style:normal;letter-spacing:-0.1px">End position</div>
<div class="t" style="left:1490.0px;top:604.7px;font-size:12px;color:#111;font-weight:normal;font-style:normal;">Master</div>
<div class="abs" style="left:1673px;top:599.5px;width:235px;height:21px;background:#e2e2e2"></div>
<div class="t" style="left:1679.0px;top:604.4px;font-size:12px;color:#111;font-weight:normal;font-style:normal;">O2</div>
<svg style="left:1895px;top:607px" width="10" height="7"><path d="M0.5,0.5 L8.5,0.5 L4.5,5.5Z" fill="#111"/></svg>
<div class="t" style="left:1490.0px;top:628.7px;font-size:12px;color:#111;font-weight:normal;font-style:normal;">Master point</div>
<div class="abs" style="left:1673px;top:623.5px;width:235px;height:21px;background:#e2e2e2"></div>
<div class="t" style="left:1679.0px;top:628.4px;font-size:12px;color:#111;font-weight:normal;font-style:normal;">4</div>
<svg style="left:1895px;top:631px" width="10" height="7"><path d="M0.5,0.5 L8.5,0.5 L4.5,5.5Z" fill="#111"/></svg>
<div class="t" style="left:1490.0px;top:652.7px;font-size:12px;color:#111;font-weight:normal;font-style:normal;">X [m]</div>
<div class="abs" style="left:1672px;top:647.5px;width:236px;height:21px;background:#efefef"></div>
<div class="t" style="left:1678.0px;top:652.4px;font-size:12px;color:#111;font-weight:normal;font-style:normal;">-0.05</div>
<div class="t" style="left:1490.0px;top:676.7px;font-size:12px;color:#111;font-weight:normal;font-style:normal;">Z [m]</div>
<div class="abs" style="left:1672px;top:671.5px;width:236px;height:21px;background:#efefef"></div>
<div class="t" style="left:1678.0px;top:676.4px;font-size:12px;color:#111;font-weight:normal;font-style:normal;">0.50</div>
<div class="abs" style="left:1451px;top:921px;width:465px;height:1px;background:#d6d6d6"></div>
<svg style="left:1258px;top:293.5px" width="8" height="8"><path d="M6.2,0 L6.2,6.2 L0,6.2Z" fill="#333"/></svg>
<div class="t" style="left:1277.0px;top:290.0px;font-size:12.5px;color:#333;font-weight:bold;font-style:normal;letter-spacing:-0.25px">DRM1</div>
<svg style="left:1278px;top:315.5px" width="8" height="8"><path d="M6.2,0 L6.2,6.2 L0,6.2Z" fill="#333"/></svg>
<div class="t" style="left:1297.0px;top:312.0px;font-size:12.5px;color:#333;font-weight:bold;font-style:normal;letter-spacing:-0.25px">Members</div>
<div class="t" style="left:1296.0px;top:333.6px;font-size:12px;color:#333;font-weight:normal;font-style:normal;letter-spacing:-0.3px">W1</div>
<div class="t" style="left:1296.0px;top:355.6px;font-size:12px;color:#333;font-weight:normal;font-style:normal;letter-spacing:-0.3px">O2</div>
<svg style="left:1278px;top:381.5px" width="8" height="8"><path d="M6.2,0 L6.2,6.2 L0,6.2Z" fill="#333"/></svg>
<div class="t" style="left:1297.0px;top:378.0px;font-size:12.5px;color:#333;font-weight:bold;font-style:normal;letter-spacing:-0.25px">Supports</div>
<div class="t" style="left:1296.0px;top:399.6px;font-size:12px;color:#333;font-weight:normal;font-style:normal;letter-spacing:-0.3px">LS1</div>
<div class="t" style="left:1296.0px;top:421.6px;font-size:12px;color:#333;font-weight:normal;font-style:normal;letter-spacing:-0.3px">LS2</div>
<div class="t" style="left:1296.0px;top:443.6px;font-size:12px;color:#333;font-weight:normal;font-style:normal;letter-spacing:-0.3px">LS3</div>
<svg style="left:1278px;top:469.5px" width="8" height="8"><path d="M6.2,0 L6.2,6.2 L0,6.2Z" fill="#333"/></svg>
<div class="t" style="left:1297.0px;top:466.0px;font-size:12.5px;color:#333;font-weight:bold;font-style:normal;letter-spacing:-0.25px">Loads and Combin...</div>
<svg style="left:1298px;top:491.5px" width="8" height="8"><path d="M6.2,0 L6.2,6.2 L0,6.2Z" fill="#333"/></svg>
<div class="t" style="left:1317.0px;top:488.0px;font-size:12.5px;color:#333;font-weight:bold;font-style:normal;letter-spacing:-0.25px">Load cases</div>
<div class="t" style="left:1316.0px;top:509.6px;font-size:12px;color:#333;font-weight:normal;font-style:normal;letter-spacing:-0.3px">LC1</div>
<div class="t" style="left:1316.0px;top:531.6px;font-size:12px;color:#333;font-weight:normal;font-style:normal;letter-spacing:-0.3px">LC2</div>
<svg style="left:1298px;top:557.5px" width="8" height="8"><path d="M6.2,0 L6.2,6.2 L0,6.2Z" fill="#333"/></svg>
<div class="t" style="left:1317.0px;top:554.0px;font-size:12.5px;color:#333;font-weight:bold;font-style:normal;letter-spacing:-0.25px">ULS Combinations</div>
<div class="abs" style="left:1317px;top:578px;width:11px;height:11px;background:#e4e4e4;border-radius:1px"></div>
<svg style="left:1316px;top:574px" width="16" height="16"><path d="M3,8.5 L6,12.5 L12.5,3" stroke="#ff8c1a" stroke-width="2.3" fill="none"/></svg>
<div class="t" style="left:1339.0px;top:577.6px;font-size:12px;color:#333;font-weight:normal;font-style:normal;letter-spacing:-0.3px">C1</div>
<svg style="left:1298px;top:601.5px" width="8" height="8"><path d="M6.2,0 L6.2,6.2 L0,6.2Z" fill="#333"/></svg>
<div class="t" style="left:1317.0px;top:598.0px;font-size:12.5px;color:#333;font-weight:bold;font-style:normal;letter-spacing:-0.25px">SLS Combinations</div>
<div class="abs" style="left:1317px;top:622px;width:11px;height:11px;background:#e4e4e4;border-radius:1px"></div>
<svg style="left:1316px;top:618px" width="16" height="16"><path d="M3,8.5 L6,12.5 L12.5,3" stroke="#ff8c1a" stroke-width="2.3" fill="none"/></svg>
<div class="t" style="left:1339.0px;top:621.6px;font-size:12px;color:#333;font-weight:normal;font-style:normal;letter-spacing:-0.3px">C2</div>
<div class="abs" style="left:1317px;top:644px;width:11px;height:11px;background:#e4e4e4;border-radius:1px"></div>
<svg style="left:1316px;top:640px" width="16" height="16"><path d="M3,8.5 L6,12.5 L12.5,3" stroke="#ff8c1a" stroke-width="2.3" fill="none"/></svg>
<div class="t" style="left:1339.0px;top:643.6px;font-size:12px;color:#333;font-weight:normal;font-style:normal;letter-spacing:-0.3px">C3</div>
<svg style="left:1278px;top:667.5px" width="8" height="8"><path d="M6.2,0 L6.2,6.2 L0,6.2Z" fill="#333"/></svg>
<div class="t" style="left:1297.0px;top:664.0px;font-size:12.5px;color:#333;font-weight:bold;font-style:normal;letter-spacing:-0.25px">Reinforcements</div>
<svg style="left:1298px;top:689.5px" width="8" height="8"><path d="M6.2,0 L6.2,6.2 L0,6.2Z" fill="#333"/></svg>
<div class="t" style="left:1317.0px;top:686.0px;font-size:12.5px;color:#333;font-weight:bold;font-style:normal;letter-spacing:-0.25px">Group of Bars</div>
<div class="abs" style="left:1317px;top:710px;width:11px;height:11px;background:#e4e4e4;border-radius:1px"></div>
<div class="t" style="left:1339.0px;top:709.6px;font-size:12px;color:#333;font-weight:normal;font-style:normal;letter-spacing:-0.3px">GB1</div>
<svg style="left:1311px;top:727px" width="112" height="21"><path d="M0,0 L95,0 L110,10.5 L95,21 L0,21Z" fill="#f37021"/></svg>
<div class="abs" style="left:1317px;top:732px;width:11px;height:11px;background:#e4e4e4;border-radius:1px"></div>
<svg style="left:1316px;top:728px" width="16" height="16"><path d="M3,8.5 L6,12.5 L12.5,3" stroke="#ff8c1a" stroke-width="2.3" fill="none"/></svg>
<div class="t" style="left:1339.0px;top:731.6px;font-size:12px;color:#fff;font-weight:normal;font-style:normal;letter-spacing:-0.3px">GB4</div>
<svg style="left:1298px;top:755.5px" width="8" height="8"><path d="M6.2,0 L6.2,6.2 L0,6.2Z" fill="#333"/></svg>
<div class="t" style="left:1317.0px;top:752.0px;font-size:12.5px;color:#333;font-weight:bold;font-style:normal;letter-spacing:-0.25px">Wire Fabrics</div>
<div class="abs" style="left:1317px;top:776px;width:11px;height:11px;background:#e4e4e4;border-radius:1px"></div>
<div class="t" style="left:1339.0px;top:775.6px;font-size:12px;color:#333;font-weight:normal;font-style:normal;letter-spacing:-0.3px">WF1</div>
<svg style="left:0;top:0" width="1920" height="1160"><rect x="1568.5" y="931.5" width="229" height="61" fill="none" stroke="#444" stroke-width="1"/><circle cx="1568.5" cy="931.5" r="2" fill="#fff" stroke="#888" stroke-width="0.8"/><circle cx="1683.5" cy="931.5" r="2" fill="#fff" stroke="#888" stroke-width="0.8"/><circle cx="1797.5" cy="931.5" r="2" fill="#fff" stroke="#888" stroke-width="0.8"/><circle cx="1568.5" cy="962" r="2" fill="#fff" stroke="#888" stroke-width="0.8"/><circle cx="1683.5" cy="962" r="2" fill="#fff" stroke="#888" stroke-width="0.8"/><circle cx="1797.5" cy="962" r="2" fill="#fff" stroke="#888" stroke-width="0.8"/><circle cx="1683.5" cy="992.5" r="2" fill="#fff" stroke="#888" stroke-width="0.8"/><circle cx="1568.5" cy="992.5" r="2.3" fill="#f37021"/><circle cx="1797.5" cy="992.5" r="2.3" fill="#f37021"/><line x1="1614" y1="977" x2="1764" y2="953" stroke="#f59a6a" stroke-width="2"/><text x="1557" y="941" font-family="Liberation Sans" font-size="12" fill="#111">4</text><text x="1685" y="944" font-family="Liberation Sans" font-size="12" fill="#111">7</text><text x="1802" y="942" font-family="Liberation Sans" font-size="12" fill="#111">3</text><text x="1557" y="975" font-family="Liberation Sans" font-size="12" fill="#111">8</text><text x="1687" y="973" font-family="Liberation Sans" font-size="12" fill="#111">0=9</text><text x="1802" y="974" font-family="Liberation Sans" font-size="12" fill="#111">6</text><text x="1685" y="1006" font-family="Liberation Sans" font-size="12" fill="#111">5</text><text x="1557" y="1004" font-family="Liberation Sans" font-size="12" fill="#f59a6a">1</text><text x="1802" y="1004" font-family="Liberation Sans" font-size="12" fill="#f59a6a">2</text><path d="M1598.5,976 L1598.5,992.5 M1596,974 L1609,976 M1596,990 L1602,995" stroke="#888" stroke-width="0.8" fill="none"/><text x="1586" y="988" font-family="Liberation Sans" font-size="11" fill="#111">Z<tspan font-size="7" dy="3">1</tspan></text><path d="M1776,952.5 L1776,992.5 M1767,952 L1780,952 M1773,990 L1779,995" stroke="#888" stroke-width="0.8" fill="none"/><text x="1778" y="977" font-family="Liberation Sans" font-size="11" fill="#111">Z<tspan font-size="7" dy="3">2</tspan></text><path d="M1568.5,1001 L1568.5,1012 M1568.5,1011 L1612.5,1011 M1612.5,1001 L1612.5,1012 M1566,1013 L1571,1008 M1610,1013 L1615,1008" stroke="#888" stroke-width="0.8" fill="none"/><text x="1585" y="1008" font-family="Liberation Sans" font-size="11" fill="#111">X<tspan font-size="7" dy="3">1</tspan></text><path d="M1763.5,1001 L1763.5,1012 M1763.5,1011 L1797.5,1011 M1797.5,1001 L1797.5,1012 M1761,1013 L1766,1008 M1795,1013 L1800,1008" stroke="#888" stroke-width="0.8" fill="none"/><text x="1775" y="1008" font-family="Liberation Sans" font-size="11" fill="#111">X<tspan font-size="7" dy="3">2</tspan></text><path d="M1568.5,1023.5 L1670.5,1023.5 L1670.5,1051 L1664,1054 L1676,1055 L1670.5,1058 L1670.5,1084.5 L1568.5,1084.5 Z" fill="none" stroke="#444" stroke-width="1"/><circle cx="1568.5" cy="1023.5" r="2" fill="#fff" stroke="#888" stroke-width="0.8"/><circle cx="1568.5" cy="1054" r="2" fill="#fff" stroke="#888" stroke-width="0.8"/><circle cx="1568.5" cy="1084.5" r="2.3" fill="#f37021"/><path d="M1606,1071 L1659.5,1071 L1659.5,1035" stroke="#f59a6a" stroke-width="2" fill="none"/><text x="1557" y="1035" font-family="Liberation Sans" font-size="12" fill="#111">4</text><text x="1557" y="1068" font-family="Liberation Sans" font-size="12" fill="#111">8</text><text x="1557" y="1096" font-family="Liberation Sans" font-size="12" fill="#f59a6a">1</text><path d="M1588,1071 L1588,1084.5 M1585,1069 L1597,1071 M1585,1082 L1591,1087" stroke="#888" stroke-width="0.8" fill="none"/><text x="1574" y="1083" font-family="Liberation Sans" font-size="11" fill="#111">Z<tspan font-size="7" dy="3">1</tspan></text><path d="M1568.5,1093 L1568.5,1103 M1568.5,1102 L1606.5,1102 M1606.5,1093 L1606.5,1103 M1566,1104 L1571,1099 M1604,1104 L1609,1099" stroke="#888" stroke-width="0.8" fill="none"/><text x="1581" y="1099" font-family="Liberation Sans" font-size="11" fill="#111">X<tspan font-size="7" dy="3">1</tspan></text><path d="M1695.5,1050 L1695.5,1023.5 L1797.5,1023.5 L1797.5,1084.5 L1695.5,1084.5 L1695.5,1058 L1701,1055 L1689,1054 Z" fill="none" stroke="#444" stroke-width="1"/><line x1="1695.5" y1="1070" x2="1782" y2="1070" stroke="#f59a6a" stroke-width="2"/><text x="1744" y="1021" font-family="Liberation Sans" font-size="12" fill="#111">T</text><text x="1802" y="1059" font-family="Liberation Sans" font-size="12" fill="#111">R</text><text x="1754" y="1081" font-family="Liberation Sans" font-size="11" fill="#111">c</text><path d="M1766.5,1069 L1766.5,1084.5 M1764,1068 L1775,1070 M1764,1082 L1769,1087" stroke="#888" stroke-width="0.8" fill="none"/><path d="M1735,1089.5 L1758,1089.5 M1753,1087 L1759,1089.5 L1753,1091.5" stroke="#f59a6a" stroke-width="1" fill="none"/><text x="1744" y="1103" font-family="Liberation Sans" font-size="12" fill="#f59a6a">B</text><text x="1766" y="1099" font-family="Liberation Sans" font-size="11" fill="#111">c</text><path d="M1779.5,1093 L1779.5,1103 M1766,1102 L1797.5,1102 M1797.5,1093 L1797.5,1103 M1777,1104 L1782,1099 M1795,1104 L1800,1099" stroke="#888" stroke-width="0.8" fill="none"/></svg>
<svg style="left:0;top:1127px" width="1920" height="33"><rect x="0" y="0" width="1920" height="1" fill="rgb(16,16,16)"/><rect x="-109" y="0" width="218" height="1" fill="rgb(42,42,42)" opacity="0.7"/><rect x="350" y="0" width="104" height="1" fill="rgb(5,5,5)" opacity="0.7"/><rect x="716" y="0" width="160" height="1" fill="rgb(10,10,10)" opacity="0.7"/><rect x="1173" y="0" width="288" height="1" fill="rgb(6,6,6)" opacity="0.7"/><rect x="1646" y="0" width="246" height="1" fill="rgb(34,34,34)" opacity="0.7"/><rect x="0" y="1" width="1920" height="1" fill="rgb(4,4,4)"/><rect x="-39" y="1" width="270" height="1" fill="rgb(5,5,5)" opacity="0.7"/><rect x="458" y="1" width="80" height="1" fill="rgb(12,12,12)" opacity="0.7"/><rect x="575" y="1" width="297" height="1" fill="rgb(5,5,5)" opacity="0.7"/><rect x="923" y="1" width="191" height="1" fill="rgb(5,5,5)" opacity="0.7"/><rect x="1166" y="1" width="370" height="1" fill="rgb(5,5,5)" opacity="0.7"/><rect x="1741" y="1" width="199" height="1" fill="rgb(5,5,5)" opacity="0.7"/><rect x="0" y="2" width="1920" height="1" fill="rgb(12,12,12)"/><rect x="-9" y="2" width="413" height="1" fill="rgb(6,6,6)" opacity="0.7"/><rect x="565" y="2" width="212" height="1" fill="rgb(5,5,5)" opacity="0.7"/><rect x="830" y="2" width="72" height="1" fill="rgb(38,38,38)" opacity="0.7"/><rect x="1041" y="2" width="114" height="1" fill="rgb(20,20,20)" opacity="0.7"/><rect x="1413" y="2" width="257" height="1" fill="rgb(38,38,38)" opacity="0.7"/><rect x="1818" y="2" width="280" height="1" fill="rgb(38,38,38)" opacity="0.7"/><rect x="0" y="3" width="1920" height="1" fill="rgb(8,8,8)"/><rect x="-73" y="3" width="153" height="1" fill="rgb(5,5,5)" opacity="0.7"/><rect x="255" y="3" width="414" height="1" fill="rgb(34,34,34)" opacity="0.7"/><rect x="766" y="3" width="370" height="1" fill="rgb(5,5,5)" opacity="0.7"/><rect x="1323" y="3" width="223" height="1" fill="rgb(16,16,16)" opacity="0.7"/><rect x="1751" y="3" width="365" height="1" fill="rgb(5,5,5)" opacity="0.7"/><rect x="0" y="4" width="1920" height="1" fill="rgb(10,10,10)"/><rect x="-100" y="4" width="141" height="1" fill="rgb(5,5,5)" opacity="0.7"/><rect x="269" y="4" width="93" height="1" fill="rgb(28,28,28)" opacity="0.7"/><rect x="399" y="4" width="306" height="1" fill="rgb(22,22,22)" opacity="0.7"/><rect x="1003" y="4" width="226" height="1" fill="rgb(5,5,5)" opacity="0.7"/><rect x="1467" y="4" width="113" height="1" fill="rgb(5,5,5)" opacity="0.7"/><rect x="1735" y="4" width="379" height="1" fill="rgb(5,5,5)" opacity="0.7"/><rect x="0" y="5" width="1920" height="1" fill="rgb(7,7,7)"/><rect x="-93" y="5" width="315" height="1" fill="rgb(25,25,25)" opacity="0.7"/><rect x="470" y="5" width="148" height="1" fill="rgb(5,5,5)" opacity="0.7"/><rect x="706" y="5" width="273" height="1" fill="rgb(15,15,15)" opacity="0.7"/><rect x="1119" y="5" width="335" height="1" fill="rgb(33,33,33)" opacity="0.7"/><rect x="1536" y="5" width="210" height="1" fill="rgb(5,5,5)" opacity="0.7"/><rect x="1909" y="5" width="350" height="1" fill="rgb(5,5,5)" opacity="0.7"/><rect x="0" y="6" width="1920" height="1" fill="rgb(12,12,12)"/><rect x="-12" y="6" width="193" height="1" fill="rgb(5,5,5)" opacity="0.7"/><rect x="425" y="6" width="186" height="1" fill="rgb(5,5,5)" opacity="0.7"/><rect x="756" y="6" width="180" height="1" fill="rgb(5,5,5)" opacity="0.7"/><rect x="1100" y="6" width="356" height="1" fill="rgb(5,5,5)" opacity="0.7"/><rect x="1643" y="6" width="93" height="1" fill="rgb(20,20,20)" opacity="0.7"/><rect x="1884" y="6" width="185" height="1" fill="rgb(24,24,24)" opacity="0.7"/><rect x="0" y="7" width="1920" height="1" fill="rgb(11,11,11)"/><rect x="-34" y="7" width="111" height="1" fill="rgb(29,29,29)" opacity="0.7"/><rect x="334" y="7" width="78" height="1" fill="rgb(5,5,5)" opacity="0.7"/><rect x="434" y="7" width="303" height="1" fill="rgb(37,37,37)" opacity="0.7"/><rect x="875" y="7" width="289" height="1" fill="rgb(5,5,5)" opacity="0.7"/><rect x="1204" y="7" width="210" height="1" fill="rgb(5,5,5)" opacity="0.7"/><rect x="1495" y="7" width="85" height="1" fill="rgb(5,5,5)" opacity="0.7"/><rect x="1699" y="7" width="98" height="1" fill="rgb(5,5,5)" opacity="0.7"/><rect x="0" y="8" width="1920" height="1" fill="rgb(9,9,9)"/><rect x="-86" y="8" width="368" height="1" fill="rgb(5,5,5)" opacity="0.7"/><rect x="305" y="8" width="114" height="1" fill="rgb(27,27,27)" opacity="0.7"/><rect x="618" y="8" width="171" height="1" fill="rgb(5,5,5)" opacity="0.7"/><rect x="997" y="8" width="234" height="1" fill="rgb(5,5,5)" opacity="0.7"/><rect x="1273" y="8" width="164" height="1" fill="rgb(5,5,5)" opacity="0.7"/><rect x="1476" y="8" width="366" height="1" fill="rgb(27,27,27)" opacity="0.7"/><rect x="0" y="9" width="1920" height="1" fill="rgb(4,4,4)"/><rect x="-117" y="9" width="269" height="1" fill="rgb(22,22,22)" opacity="0.7"/><rect x="362" y="9" width="154" height="1" fill="rgb(16,16,16)" opacity="0.7"/><rect x="695" y="9" width="99" height="1" fill="rgb(5,5,5)" opacity="0.7"/><rect x="830" y="9" width="313" height="1" fill="rgb(16,16,16)" opacity="0.7"/><rect x="1410" y="9" width="92" height="1" fill="rgb(12,12,12)" opacity="0.7"/><rect x="1573" y="9" width="262" height="1" fill="rgb(22,22,22)" opacity="0.7"/><rect x="0" y="10" width="1920" height="1" fill="rgb(21,21,21)"/><rect x="-177" y="10" width="394" height="1" fill="rgb(11,11,11)" opacity="0.7"/><rect x="440" y="10" width="416" height="1" fill="rgb(15,15,15)" opacity="0.7"/><rect x="1085" y="10" width="205" height="1" fill="rgb(39,39,39)" opacity="0.7"/><rect x="1467" y="10" width="273" height="1" fill="rgb(7,7,7)" opacity="0.7"/><rect x="1919" y="10" width="350" height="1" fill="rgb(15,15,15)" opacity="0.7"/><rect x="0" y="11" width="1920" height="1" fill="rgb(17,17,17)"/><rect x="-196" y="11" width="246" height="1" fill="rgb(35,35,35)" opacity="0.7"/><rect x="170" y="11" width="260" height="1" fill="rgb(35,35,35)" opacity="0.7"/><rect x="657" y="11" width="164" height="1" fill="rgb(5,5,5)" opacity="0.7"/><rect x="1063" y="11" width="140" height="1" fill="rgb(25,25,25)" opacity="0.7"/><rect x="1281" y="11" width="106" height="1" fill="rgb(25,25,25)" opacity="0.7"/><rect x="1593" y="11" width="295" height="1" fill="rgb(43,43,43)" opacity="0.7"/><rect x="0" y="12" width="1920" height="1" fill="rgb(8,8,8)"/><rect x="-197" y="12" width="86" height="1" fill="rgb(20,20,20)" opacity="0.7"/><rect x="-19" y="12" width="388" height="1" fill="rgb(34,34,34)" opacity="0.7"/><rect x="592" y="12" width="105" height="1" fill="rgb(20,20,20)" opacity="0.7"/><rect x="906" y="12" width="318" height="1" fill="rgb(5,5,5)" opacity="0.7"/><rect x="1318" y="12" width="238" height="1" fill="rgb(5,5,5)" opacity="0.7"/><rect x="1658" y="12" width="326" height="1" fill="rgb(5,5,5)" opacity="0.7"/><rect x="0" y="13" width="1920" height="1" fill="rgb(7,7,7)"/><rect x="-102" y="13" width="311" height="1" fill="rgb(33,33,33)" opacity="0.7"/><rect x="330" y="13" width="214" height="1" fill="rgb(5,5,5)" opacity="0.7"/><rect x="586" y="13" width="307" height="1" fill="rgb(5,5,5)" opacity="0.7"/><rect x="940" y="13" width="371" height="1" fill="rgb(25,25,25)" opacity="0.7"/><rect x="1529" y="13" width="104" height="1" fill="rgb(25,25,25)" opacity="0.7"/><rect x="1735" y="13" width="387" height="1" fill="rgb(33,33,33)" opacity="0.7"/><rect x="0" y="14" width="1920" height="1" fill="rgb(16,16,16)"/><rect x="-43" y="14" width="160" height="1" fill="rgb(42,42,42)" opacity="0.7"/><rect x="379" y="14" width="153" height="1" fill="rgb(28,28,28)" opacity="0.7"/><rect x="663" y="14" width="81" height="1" fill="rgb(24,24,24)" opacity="0.7"/><rect x="1029" y="14" width="140" height="1" fill="rgb(24,24,24)" opacity="0.7"/><rect x="1372" y="14" width="123" height="1" fill="rgb(6,6,6)" opacity="0.7"/><rect x="1641" y="14" width="158" height="1" fill="rgb(5,5,5)" opacity="0.7"/><rect x="1838" y="14" width="401" height="1" fill="rgb(42,42,42)" opacity="0.7"/><rect x="0" y="15" width="1920" height="1" fill="rgb(7,7,7)"/><rect x="-101" y="15" width="366" height="1" fill="rgb(15,15,15)" opacity="0.7"/><rect x="441" y="15" width="392" height="1" fill="rgb(15,15,15)" opacity="0.7"/><rect x="1010" y="15" width="358" height="1" fill="rgb(5,5,5)" opacity="0.7"/><rect x="1605" y="15" width="259" height="1" fill="rgb(25,25,25)" opacity="0.7"/><rect x="0" y="16" width="1920" height="1" fill="rgb(18,18,18)"/><rect x="-72" y="16" width="284" height="1" fill="rgb(8,8,8)" opacity="0.7"/><rect x="243" y="16" width="61" height="1" fill="rgb(30,30,30)" opacity="0.7"/><rect x="574" y="16" width="298" height="1" fill="rgb(8,8,8)" opacity="0.7"/><rect x="1120" y="16" width="376" height="1" fill="rgb(44,44,44)" opacity="0.7"/><rect x="1750" y="16" width="151" height="1" fill="rgb(44,44,44)" opacity="0.7"/><rect x="0" y="17" width="1920" height="1" fill="rgb(16,16,16)"/><rect x="-173" y="17" width="94" height="1" fill="rgb(6,6,6)" opacity="0.7"/><rect x="124" y="17" width="280" height="1" fill="rgb(10,10,10)" opacity="0.7"/><rect x="470" y="17" width="286" height="1" fill="rgb(28,28,28)" opacity="0.7"/><rect x="1037" y="17" width="396" height="1" fill="rgb(5,5,5)" opacity="0.7"/><rect x="1473" y="17" width="385" height="1" fill="rgb(6,6,6)" opacity="0.7"/><rect x="0" y="18" width="1920" height="1" fill="rgb(14,14,14)"/><rect x="-1" y="18" width="321" height="1" fill="rgb(5,5,5)" opacity="0.7"/><rect x="367" y="18" width="318" height="1" fill="rgb(22,22,22)" opacity="0.7"/><rect x="774" y="18" width="73" height="1" fill="rgb(40,40,40)" opacity="0.7"/><rect x="900" y="18" width="374" height="1" fill="rgb(32,32,32)" opacity="0.7"/><rect x="1350" y="18" width="159" height="1" fill="rgb(5,5,5)" opacity="0.7"/><rect x="1780" y="18" width="207" height="1" fill="rgb(40,40,40)" opacity="0.7"/><rect x="0" y="19" width="1920" height="1" fill="rgb(11,11,11)"/><rect x="-184" y="19" width="239" height="1" fill="rgb(23,23,23)" opacity="0.7"/><rect x="204" y="19" width="141" height="1" fill="rgb(5,5,5)" opacity="0.7"/><rect x="505" y="19" width="293" height="1" fill="rgb(5,5,5)" opacity="0.7"/><rect x="948" y="19" width="317" height="1" fill="rgb(19,19,19)" opacity="0.7"/><rect x="1391" y="19" width="363" height="1" fill="rgb(5,5,5)" opacity="0.7"/><rect x="0" y="20" width="1920" height="1" fill="rgb(11,11,11)"/><rect x="-119" y="20" width="250" height="1" fill="rgb(5,5,5)" opacity="0.7"/><rect x="252" y="20" width="153" height="1" fill="rgb(19,19,19)" opacity="0.7"/><rect x="507" y="20" width="385" height="1" fill="rgb(5,5,5)" opacity="0.7"/><rect x="1079" y="20" width="252" height="1" fill="rgb(5,5,5)" opacity="0.7"/><rect x="1486" y="20" width="118" height="1" fill="rgb(37,37,37)" opacity="0.7"/><rect x="1895" y="20" width="84" height="1" fill="rgb(29,29,29)" opacity="0.7"/><rect x="0" y="21" width="1920" height="1" fill="rgb(18,18,18)"/><rect x="-58" y="21" width="326" height="1" fill="rgb(30,30,30)" opacity="0.7"/><rect x="341" y="21" width="189" height="1" fill="rgb(30,30,30)" opacity="0.7"/><rect x="751" y="21" width="250" height="1" fill="rgb(12,12,12)" opacity="0.7"/><rect x="1213" y="21" width="248" height="1" fill="rgb(30,30,30)" opacity="0.7"/><rect x="1555" y="21" width="244" height="1" fill="rgb(12,12,12)" opacity="0.7"/><rect x="1860" y="21" width="286" height="1" fill="rgb(8,8,8)" opacity="0.7"/><rect x="0" y="22" width="1920" height="1" fill="rgb(5,5,5)"/><rect x="-125" y="22" width="324" height="1" fill="rgb(5,5,5)" opacity="0.7"/><rect x="377" y="22" width="387" height="1" fill="rgb(31,31,31)" opacity="0.7"/><rect x="944" y="22" width="60" height="1" fill="rgb(23,23,23)" opacity="0.7"/><rect x="1041" y="22" width="173" height="1" fill="rgb(5,5,5)" opacity="0.7"/><rect x="1382" y="22" width="375" height="1" fill="rgb(23,23,23)" opacity="0.7"/><rect x="0" y="23" width="1920" height="1" fill="rgb(17,17,17)"/><rect x="-69" y="23" width="246" height="1" fill="rgb(5,5,5)" opacity="0.7"/><rect x="264" y="23" width="310" height="1" fill="rgb(7,7,7)" opacity="0.7"/><rect x="617" y="23" width="71" height="1" fill="rgb(5,5,5)" opacity="0.7"/><rect x="709" y="23" width="350" height="1" fill="rgb(11,11,11)" opacity="0.7"/><rect x="1234" y="23" width="114" height="1" fill="rgb(29,29,29)" opacity="0.7"/><rect x="1550" y="23" width="333" height="1" fill="rgb(7,7,7)" opacity="0.7"/><rect x="0" y="24" width="1920" height="1" fill="rgb(22,22,22)"/><rect x="-123" y="24" width="361" height="1" fill="rgb(12,12,12)" opacity="0.7"/><rect x="362" y="24" width="247" height="1" fill="rgb(34,34,34)" opacity="0.7"/><rect x="872" y="24" width="141" height="1" fill="rgb(12,12,12)" opacity="0.7"/><rect x="1040" y="24" width="184" height="1" fill="rgb(40,40,40)" opacity="0.7"/><rect x="1320" y="24" width="290" height="1" fill="rgb(8,8,8)" opacity="0.7"/><rect x="1662" y="24" width="386" height="1" fill="rgb(12,12,12)" opacity="0.7"/><rect x="0" y="25" width="1920" height="1" fill="rgb(16,16,16)"/><rect x="-133" y="25" width="65" height="1" fill="rgb(5,5,5)" opacity="0.7"/><rect x="131" y="25" width="364" height="1" fill="rgb(34,34,34)" opacity="0.7"/><rect x="742" y="25" width="368" height="1" fill="rgb(28,28,28)" opacity="0.7"/><rect x="1382" y="25" width="187" height="1" fill="rgb(6,6,6)" opacity="0.7"/><rect x="1589" y="25" width="82" height="1" fill="rgb(5,5,5)" opacity="0.7"/><rect x="0" y="26" width="1920" height="1" fill="rgb(4,4,4)"/><rect x="-97" y="26" width="155" height="1" fill="rgb(5,5,5)" opacity="0.7"/><rect x="159" y="26" width="89" height="1" fill="rgb(30,30,30)" opacity="0.7"/><rect x="321" y="26" width="66" height="1" fill="rgb(16,16,16)" opacity="0.7"/><rect x="507" y="26" width="132" height="1" fill="rgb(12,12,12)" opacity="0.7"/><rect x="761" y="26" width="325" height="1" fill="rgb(16,16,16)" opacity="0.7"/><rect x="1365" y="26" width="391" height="1" fill="rgb(22,22,22)" opacity="0.7"/><rect x="0" y="27" width="1920" height="1" fill="rgb(9,9,9)"/><rect x="-70" y="27" width="218" height="1" fill="rgb(5,5,5)" opacity="0.7"/><rect x="321" y="27" width="380" height="1" fill="rgb(5,5,5)" opacity="0.7"/><rect x="965" y="27" width="335" height="1" fill="rgb(5,5,5)" opacity="0.7"/><rect x="1512" y="27" width="283" height="1" fill="rgb(27,27,27)" opacity="0.7"/><rect x="0" y="28" width="1920" height="1" fill="rgb(6,6,6)"/><rect x="-11" y="28" width="395" height="1" fill="rgb(14,14,14)" opacity="0.7"/><rect x="493" y="28" width="175" height="1" fill="rgb(5,5,5)" opacity="0.7"/><rect x="821" y="28" width="178" height="1" fill="rgb(24,24,24)" opacity="0.7"/><rect x="1038" y="28" width="123" height="1" fill="rgb(5,5,5)" opacity="0.7"/><rect x="1315" y="28" width="86" height="1" fill="rgb(5,5,5)" opacity="0.7"/><rect x="1644" y="28" width="411" height="1" fill="rgb(32,32,32)" opacity="0.7"/><rect x="0" y="29" width="1920" height="1" fill="rgb(12,12,12)"/><rect x="-125" y="29" width="388" height="1" fill="rgb(5,5,5)" opacity="0.7"/><rect x="326" y="29" width="319" height="1" fill="rgb(5,5,5)" opacity="0.7"/><rect x="751" y="29" width="193" height="1" fill="rgb(5,5,5)" opacity="0.7"/><rect x="1067" y="29" width="141" height="1" fill="rgb(30,30,30)" opacity="0.7"/><rect x="1395" y="29" width="158" height="1" fill="rgb(20,20,20)" opacity="0.7"/><rect x="1741" y="29" width="367" height="1" fill="rgb(5,5,5)" opacity="0.7"/><rect x="0" y="30" width="1920" height="1" fill="rgb(21,21,21)"/><rect x="-80" y="30" width="301" height="1" fill="rgb(47,47,47)" opacity="0.7"/><rect x="512" y="30" width="417" height="1" fill="rgb(7,7,7)" opacity="0.7"/><rect x="962" y="30" width="283" height="1" fill="rgb(39,39,39)" opacity="0.7"/><rect x="1384" y="30" width="352" height="1" fill="rgb(15,15,15)" opacity="0.7"/><rect x="1864" y="30" width="260" height="1" fill="rgb(33,33,33)" opacity="0.7"/><rect x="0" y="31" width="1920" height="1" fill="rgb(22,22,22)"/><rect x="-157" y="31" width="134" height="1" fill="rgb(8,8,8)" opacity="0.7"/><rect x="10" y="31" width="117" height="1" fill="rgb(8,8,8)" opacity="0.7"/><rect x="229" y="31" width="236" height="1" fill="rgb(12,12,12)" opacity="0.7"/><rect x="499" y="31" width="75" height="1" fill="rgb(8,8,8)" opacity="0.7"/><rect x="664" y="31" width="414" height="1" fill="rgb(40,40,40)" opacity="0.7"/><rect x="1119" y="31" width="416" height="1" fill="rgb(8,8,8)" opacity="0.7"/><rect x="1578" y="31" width="93" height="1" fill="rgb(48,48,48)" opacity="0.7"/><rect x="1877" y="31" width="162" height="1" fill="rgb(48,48,48)" opacity="0.7"/><rect x="0" y="32" width="1920" height="1" fill="rgb(6,6,6)"/><rect x="-7" y="32" width="256" height="1" fill="rgb(5,5,5)" opacity="0.7"/><rect x="395" y="32" width="165" height="1" fill="rgb(5,5,5)" opacity="0.7"/><rect x="637" y="32" width="77" height="1" fill="rgb(5,5,5)" opacity="0.7"/><rect x="778" y="32" width="383" height="1" fill="rgb(24,24,24)" opacity="0.7"/><rect x="1328" y="32" width="304" height="1" fill="rgb(5,5,5)" opacity="0.7"/><rect x="1719" y="32" width="110" height="1" fill="rgb(32,32,32)" opacity="0.7"/></svg>
<div class="t" style="left:18.0px;top:1139.6px;font-size:12px;color:#fff;font-weight:bold;font-style:normal;letter-spacing:-0.2px"><span style="color:#8a8a8a">Design Code:</span> EN</div>
<div class="t" style="left:138.0px;top:1139.6px;font-size:12px;color:#fff;font-weight:bold;font-style:normal;letter-spacing:-0.2px"><span style="color:#8a8a8a">Rounding:</span> Metric</div>
<div class="t" style="left:264.0px;top:1139.6px;font-size:12px;color:#fff;font-weight:bold;font-style:normal;letter-spacing:-0.2px"><span style="color:#8a8a8a">Presentation Units:</span> Metric</div>
<div class="t" style="left:1794.0px;top:1139.1px;font-size:12px;color:#fff;font-weight:normal;font-style:normal;"><span style="color:#f37021">www.</span>ideastatica <span style="color:#f37021">.com</span></div>
</body></html>
